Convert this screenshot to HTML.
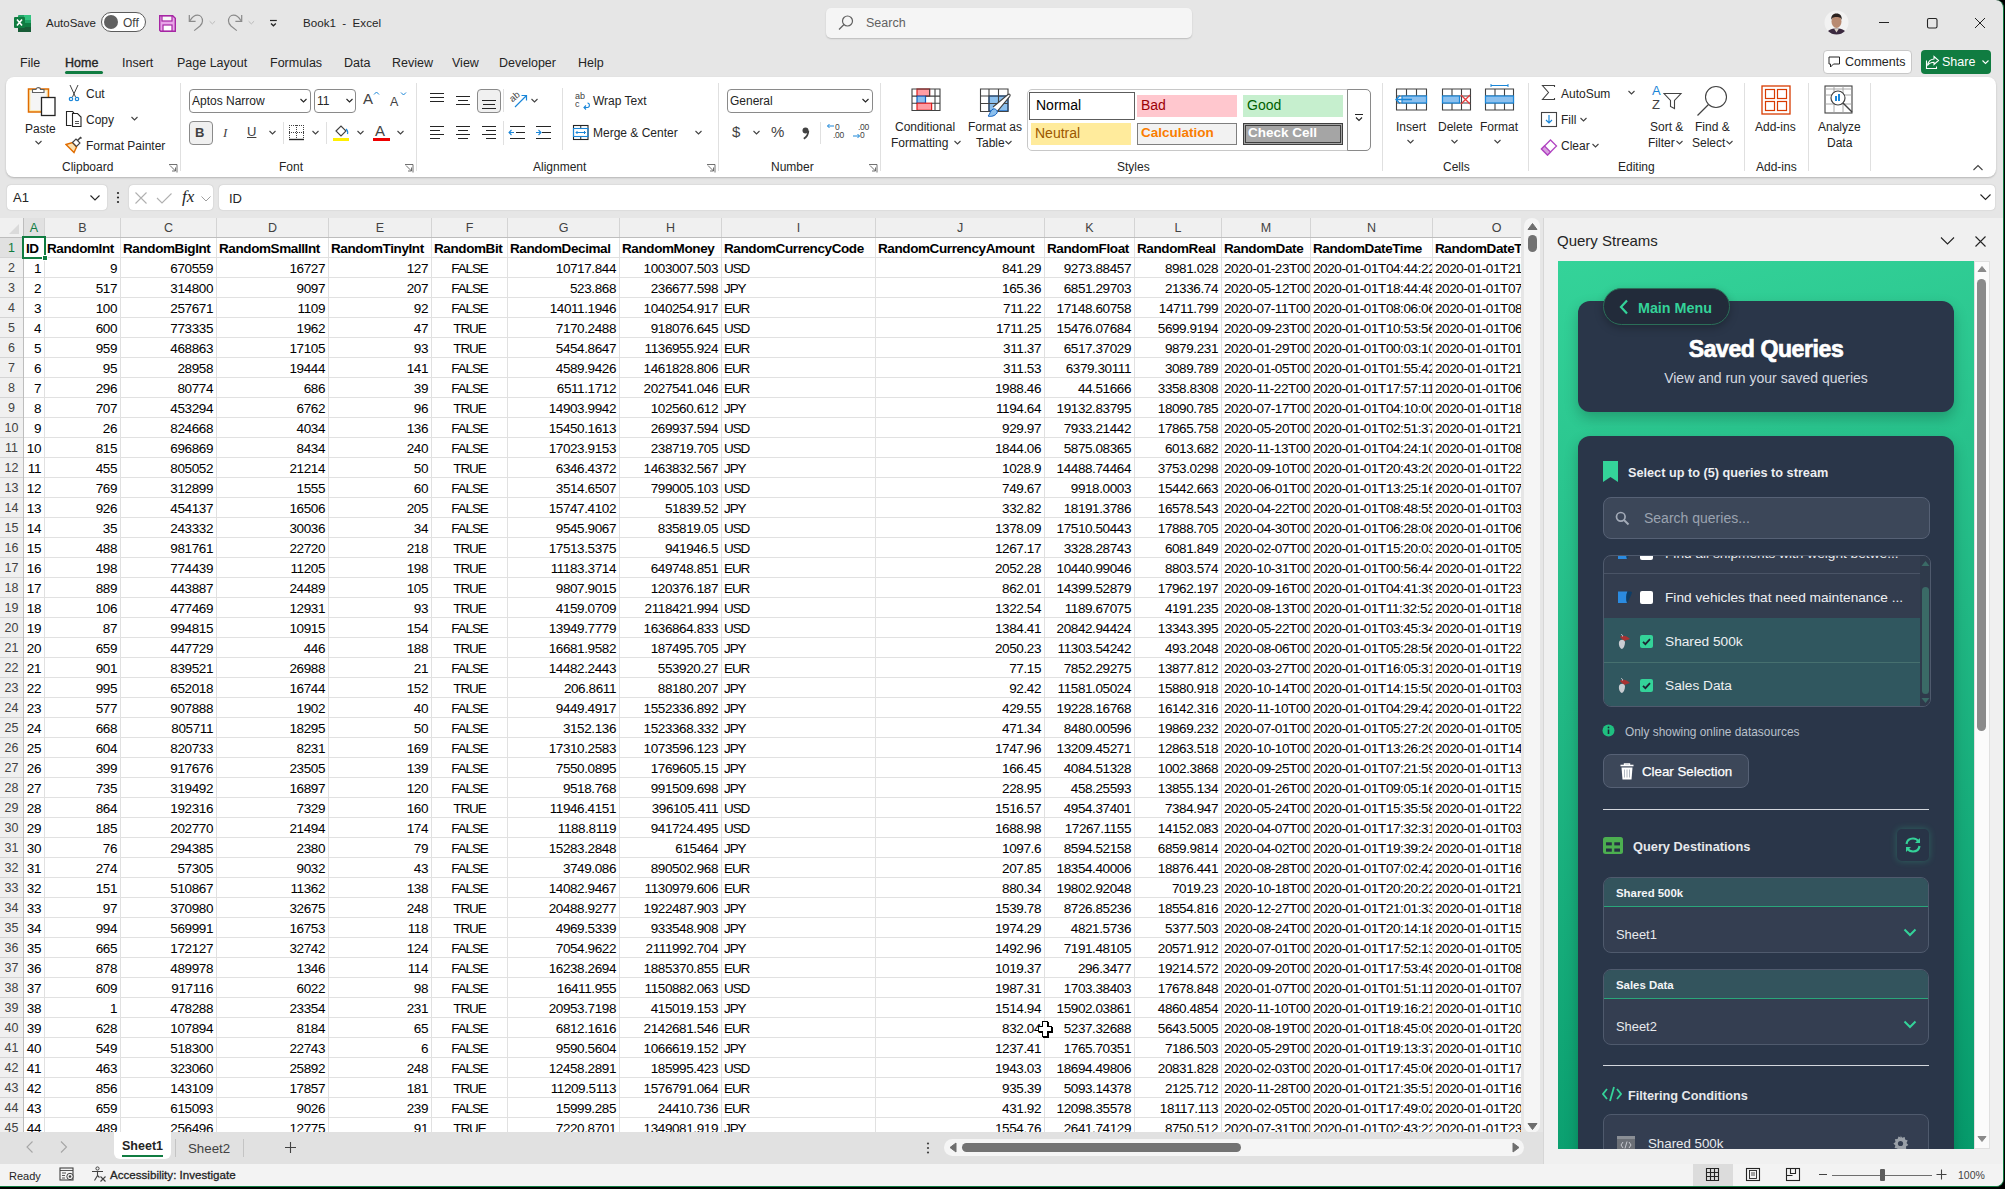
<!DOCTYPE html>
<html><head><meta charset="utf-8"><title>Book1 - Excel</title>
<style>
*{margin:0;padding:0;box-sizing:border-box}
html,body{width:2005px;height:1189px;overflow:hidden;background:#000}
body{font-family:"Liberation Sans",sans-serif;color:#242424;position:relative}
#win{position:absolute;left:0;top:0;width:2004px;height:1187px;background:#e6e6e6;overflow:hidden;border-radius:0 8px 8px 0;border-right:1px solid #107c41;border-bottom:1px solid #107c41}
.a{position:absolute}
.t{position:absolute;white-space:nowrap;font-size:14px;line-height:16px}
#grid .row{position:absolute;left:0;width:1521px;height:19px}
#grid .row div{position:absolute;top:0;height:19px;line-height:22px;white-space:nowrap;overflow:hidden;font-size:13.5px;letter-spacing:-0.4px;color:#000}
#grid .cr{text-align:right;padding-right:3px}
#grid .cl{text-align:left;padding-left:2px}
#grid .cc{text-align:center}
#grid .cb{font-weight:bold;padding-left:2px}
#grid .ch{position:absolute;top:0;height:19px;line-height:20px;text-align:center;font-size:12.5px}
#grid .rh{position:absolute;left:0;width:23px;height:19px;line-height:20px;text-align:center;font-size:12.5px}
#grid .row .up{letter-spacing:-1.1px}

</style></head>
<body>
<div id="win">
<!-- title bar -->
<svg class="a" style="left:14px;top:15px" width="17" height="17" viewBox="0 0 17 17">
<rect x="4" y="0" width="13" height="17" rx="1" fill="#21a366"/>
<rect x="10" y="0" width="7" height="5" fill="#33c481"/>
<rect x="4" y="8" width="13" height="5" fill="#107c41"/>
<rect x="4" y="12" width="13" height="5" fill="#185c37"/>
<rect x="0" y="2" width="11" height="11" rx="1" fill="#107c41"/>
<path d="M3 4.5l5 6M8 4.5l-5 6" stroke="#fff" stroke-width="1.6"/>
</svg>
<div class="t" style="left:46px;top:15px;font-size:11.5px;color:#242424">AutoSave</div>
<div class="a" style="left:101px;top:12px;width:45px;height:20px;border:1.3px solid #5c5c5c;border-radius:10px;background:#fff"></div>
<div class="a" style="left:104px;top:15px;width:14px;height:14px;border-radius:7px;background:#616161"></div>
<div class="t" style="left:123px;top:15px;font-size:12px;color:#424242">Off</div>
<svg class="a" style="left:159px;top:15px" width="17" height="17" viewBox="0 0 17 17">
<path d="M0.7 0.7h13l2.6 2.6v13h-14.6l-1-1z" fill="#e8a6e8" stroke="#a626a4" stroke-width="1.4"/>
<rect x="3" y="1" width="10" height="5" fill="#f7f7f7" stroke="#a626a4" stroke-width="1.2"/>
<rect x="4" y="10" width="9" height="6" fill="#fff" stroke="#a626a4" stroke-width="1.2"/>
</svg>
<svg class="a" style="left:180px;top:8px" width="110" height="30" viewBox="0 0 110 30">
<path d="M9.3 7.1v6.3h6.3" fill="none" stroke="#8a8a8a" stroke-width="1.2"/>
<path d="M10 12.8c2-3.5 4.5-5.6 7.5-5.6c3 0 5 2.5 5 5.8c0 2-1 3.5-2.5 5l-5.8 4.6" fill="none" stroke="#8a8a8a" stroke-width="1.2"/>
<path d="M29.6 13.2l2.75 2.7l2.75-2.7" fill="none" stroke="#b4b4b4" stroke-width="0.9"/>
<path d="M61.7 7.1v6.3h-6.3" fill="none" stroke="#8a8a8a" stroke-width="1.2"/>
<path d="M61 12.8c-2-3.5-4.5-5.6-7.5-5.6c-3 0-5 2.5-5 5.8c0 2 1 3.5 2.5 5l5.8 4.6" fill="none" stroke="#8a8a8a" stroke-width="1.2"/>
<path d="M68.6 13.2l2.75 2.7l2.75-2.7" fill="none" stroke="#b4b4b4" stroke-width="0.9"/>
<path d="M90 12.5h6.8" stroke="#242424" stroke-width="1.2"/>
<path d="M91 15.6l2.4 2.2l2.4-2.2" fill="none" stroke="#242424" stroke-width="1.3"/>
</svg>
<div class="t" style="left:303px;top:15px;font-size:11.6px;color:#242424">Book1&nbsp;&nbsp;-&nbsp;&nbsp;Excel</div>
<div class="a" style="left:826px;top:8px;width:366px;height:30px;background:#f5f5f5;border-radius:5px;box-shadow:0 1px 1.5px rgba(0,0,0,0.18)"></div>
<svg class="a" style="left:838px;top:15px" width="16" height="16" viewBox="0 0 16 16">
<circle cx="9.5" cy="6" r="5" fill="none" stroke="#616161" stroke-width="1.2"/>
<path d="M6 9.5l-5 5" stroke="#616161" stroke-width="1.3"/>
</svg>
<div class="t" style="left:866px;top:15px;font-size:12.5px;color:#616161">Search</div>
<svg class="a" style="left:1824px;top:10px" width="25" height="25" viewBox="0 0 25 25"><defs><clipPath id="av"><circle cx="12.5" cy="12.5" r="12"/></clipPath></defs><g clip-path="url(#av)"><rect width="25" height="25" fill="#f2f2f2"/><path d="M2 25c1-5 5-6.5 10.5-6.5s9.5 1.5 10.5 6.5z" fill="#3b2a3f"/><path d="M10 18.5l2.5 4l2.5-4z" fill="#d8cfc4"/><ellipse cx="12.5" cy="11.5" rx="5" ry="6.5" fill="#b88a72"/><path d="M7.3 10c-0.5-4 1.5-6.5 5.2-6.5s5.7 2.5 5.2 6.5c-0.5-2-1.5-3-5.2-3s-4.7 1-5.2 3z" fill="#2b2220"/></g></svg>
<svg class="a" style="left:1870px;top:8px" width="130" height="30" viewBox="0 0 130 30">
<path d="M9 14.5h10" stroke="#242424" stroke-width="1"/>
<rect x="57.5" y="10.5" width="9.5" height="9.5" rx="1.5" fill="none" stroke="#242424" stroke-width="1.1"/>
<path d="M105 10l10 10M115 10l-10 10" stroke="#242424" stroke-width="1"/>
</svg>
<!-- tabs -->
<div class="t" style="left:20px;top:55px;font-size:12.5px">File</div>
<div class="t" style="left:65px;top:55px;font-size:12.5px;color:#242424;-webkit-text-stroke:0.35px #242424">Home</div>
<div class="a" style="left:65px;top:71px;width:38px;height:3px;border-radius:2px;background:#107c41"></div>
<div class="t" style="left:122px;top:55px;font-size:12.5px">Insert</div>
<div class="t" style="left:177px;top:55px;font-size:12.5px">Page Layout</div>
<div class="t" style="left:270px;top:55px;font-size:12.5px">Formulas</div>
<div class="t" style="left:344px;top:55px;font-size:12.5px">Data</div>
<div class="t" style="left:392px;top:55px;font-size:12.5px">Review</div>
<div class="t" style="left:452px;top:55px;font-size:12.5px">View</div>
<div class="t" style="left:499px;top:55px;font-size:12.5px">Developer</div>
<div class="t" style="left:578px;top:55px;font-size:12.5px">Help</div>
<div class="a" style="left:1823px;top:50px;width:89px;height:24px;background:#fff;border:1px solid #c8c8c8;border-radius:4px"></div>
<svg class="a" style="left:1828px;top:56px" width="13" height="12" viewBox="0 0 13 12">
<path d="M1 1h10.5v7h-6l-3 3v-3h-1.5z" fill="none" stroke="#242424" stroke-width="1"/>
</svg>
<div class="t" style="left:1845px;top:54px;font-size:12.5px">Comments</div>
<div class="a" style="left:1921px;top:50px;width:70px;height:24px;background:#107c41;border-radius:4px"></div>
<svg class="a" style="left:1925px;top:55px" width="15" height="15" viewBox="0 0 15 15">
<path d="M9 1.5l4.5 4l-4.5 4v-2.3c-3 0-5 1-6.5 3.3c0.5-3.5 2.5-6 6.5-6.5z" fill="none" stroke="#fff" stroke-width="1.1"/>
<path d="M1.5 5.5v8h10v-2" fill="none" stroke="#fff" stroke-width="1.1"/>
</svg>
<div class="t" style="left:1942px;top:54px;font-size:12.5px;color:#fff">Share</div>
<svg class="a" style="left:1981px;top:58px" width="10" height="8" viewBox="0 0 10 8"><path d="M1.5 2.5l3 3l3-3" fill="none" stroke="#fff" stroke-width="1.1"/></svg>

<!-- ribbon -->
<div class="a" style="left:6px;top:77px;width:1990px;height:100px;background:#fff;border-radius:8px;box-shadow:0 1px 2px rgba(0,0,0,0.22)"></div>
<div class="a" style="left:180px;top:83px;width:1px;height:88px;background:#e0e0e0"></div>
<div class="a" style="left:416px;top:83px;width:1px;height:88px;background:#e0e0e0"></div>
<div class="a" style="left:718px;top:83px;width:1px;height:88px;background:#e0e0e0"></div>
<div class="a" style="left:880px;top:83px;width:1px;height:88px;background:#e0e0e0"></div>
<div class="a" style="left:1382px;top:83px;width:1px;height:88px;background:#e0e0e0"></div>
<div class="a" style="left:1528px;top:83px;width:1px;height:88px;background:#e0e0e0"></div>
<div class="a" style="left:1744px;top:83px;width:1px;height:88px;background:#e0e0e0"></div>
<div class="a" style="left:1808px;top:83px;width:1px;height:88px;background:#e0e0e0"></div>
<div class="a" style="left:1870px;top:83px;width:1px;height:88px;background:#e0e0e0"></div>
<!-- clipboard -->
<svg class="a" style="left:27px;top:85px" width="30" height="32" viewBox="0 0 30 32">
<rect x="1.5" y="4" width="20" height="23" fill="#fde9b0" stroke="#e06c00" stroke-width="1.5"/>
<rect x="3.5" y="6" width="16" height="19" fill="#f5f5f5"/>
<path d="M5.5 7.5v-3h3.5c0-2.5 4.5-2.5 4.5 0h3.5v3z" fill="#fff" stroke="#616161" stroke-width="1.1"/>
<rect x="14.5" y="12.5" width="13.5" height="18" fill="#fff" stroke="#242424" stroke-width="1.3"/>
</svg>
<div class="t" style="left:25px;top:121px;font-size:12px">Paste</div>
<svg class="a" style="left:34px;top:140px" width="9" height="6" viewBox="0 0 9 6"><path d="M1.5 1l3 3l3-3" fill="none" stroke="#424242" stroke-width="1.1"/></svg>
<svg class="a" style="left:67px;top:84px" width="14" height="18" viewBox="0 0 14 18">
<path d="M3 1l5.5 12M11 1l-5.5 12" stroke="#424242" stroke-width="1"/>
<circle cx="4" cy="15" r="1.7" fill="none" stroke="#1a86d8" stroke-width="1.2"/>
<circle cx="10" cy="15" r="1.7" fill="none" stroke="#1a86d8" stroke-width="1.2"/>
</svg>
<div class="t" style="left:86px;top:86px;font-size:12px">Cut</div>
<svg class="a" style="left:65px;top:110px" width="18" height="18" viewBox="0 0 18 18">
<path d="M6.5 15.5h-5v-14h6l1.5 1.5" fill="none" stroke="#242424" stroke-width="1.1"/>
<path d="M7.5 3.5h5l3.5 3.5v9.5h-8.5z" fill="#fff" stroke="#242424" stroke-width="1.1"/>
<path d="M10 11.5h4M10 13.5h4" stroke="#424242" stroke-width="0.9"/>
</svg>
<div class="t" style="left:86px;top:112px;font-size:12px">Copy</div>
<svg class="a" style="left:130px;top:116px" width="9" height="6" viewBox="0 0 9 6"><path d="M1.5 1l3 3l3-3" fill="none" stroke="#424242" stroke-width="1.1"/></svg>
<svg class="a" style="left:65px;top:136px" width="18" height="18" viewBox="0 0 18 18">
<path d="M1 8.5l6.5-2l4 4.5l-2.5 5.5z" fill="#fde2b0" stroke="#e06c00" stroke-width="1.4"/>
<path d="M7.5 6.5l3.5-3.5l4 4l-3.5 3.5z" fill="#fff" stroke="#424242" stroke-width="1.1"/>
<path d="M12.5 4.5l3-3l1 1" fill="none" stroke="#424242" stroke-width="1.5"/>
</svg>
<div class="t" style="left:86px;top:138px;font-size:12px">Format Painter</div>
<div class="t" style="left:62px;top:159px;font-size:12px">Clipboard</div>
<svg class="a" style="left:168px;top:163px" width="10" height="10" viewBox="0 0 10 10"><path d="M1 1.5h8v8M2 2.5l5.5 5.5M7.5 4.5v3.5h-3.5" fill="none" stroke="#616161" stroke-width="0.9"/></svg>
<!-- font -->
<div class="a" style="left:189px;top:89px;width:122px;height:24px;border:1px solid #8a8a8a;border-radius:4px"></div>
<div class="t" style="left:192px;top:93px;font-size:12px">Aptos Narrow</div>
<svg class="a" style="left:299px;top:98px" width="9" height="6" viewBox="0 0 9 6"><path d="M1.5 1l3 3l3-3" fill="none" stroke="#242424" stroke-width="1.1"/></svg>
<div class="a" style="left:314px;top:89px;width:42px;height:24px;border:1px solid #8a8a8a;border-radius:4px"></div>
<div class="t" style="left:317px;top:93px;font-size:12px">11</div>
<svg class="a" style="left:345px;top:98px" width="9" height="6" viewBox="0 0 9 6"><path d="M1.5 1l3 3l3-3" fill="none" stroke="#242424" stroke-width="1.1"/></svg>
<div class="t" style="left:363px;top:91px;font-size:15px;color:#424242">A</div>
<svg class="a" style="left:373px;top:91px" width="7" height="5" viewBox="0 0 7 5"><path d="M1 3.5l2.5-2.5l2.5 2.5" fill="none" stroke="#1a86d8" stroke-width="1"/></svg>
<div class="t" style="left:390px;top:94px;font-size:12.5px;color:#424242">A</div>
<svg class="a" style="left:400px;top:91px" width="7" height="5" viewBox="0 0 7 5"><path d="M1 1.5l2.5 2.5l2.5-2.5" fill="none" stroke="#1a86d8" stroke-width="1"/></svg>
<div class="a" style="left:189px;top:121px;width:24px;height:24px;border:1px solid #8a8a8a;border-radius:4px;background:#f0f0f0"></div>
<div class="t" style="left:195px;top:125px;font-size:13px;font-weight:bold;color:#424242">B</div>
<div class="t" style="left:223px;top:125px;font-size:13px;font-style:italic;color:#424242;font-family:'Liberation Serif'">I</div>
<div class="t" style="left:247px;top:124px;font-size:13px;color:#424242;text-decoration:underline">U</div>
<svg class="a" style="left:268px;top:130px" width="9" height="6" viewBox="0 0 9 6"><path d="M1.5 1l3 3l3-3" fill="none" stroke="#424242" stroke-width="1.1"/></svg>
<div class="a" style="left:283px;top:122px;width:1px;height:22px;background:#e0e0e0"></div>
<svg class="a" style="left:288px;top:124px" width="17" height="17" viewBox="0 0 17 17">
<path d="M1 1.5h15M1.5 1v14M15.5 1v14M8.5 1v14M1 8.5h15" fill="none" stroke="#424242" stroke-width="1" stroke-dasharray="1 1" shape-rendering="crispEdges"/>
<path d="M1 15.5h15" stroke="#242424" stroke-width="1.4"/>
</svg>
<svg class="a" style="left:311px;top:130px" width="9" height="6" viewBox="0 0 9 6"><path d="M1.5 1l3 3l3-3" fill="none" stroke="#424242" stroke-width="1.1"/></svg>
<div class="a" style="left:326px;top:122px;width:1px;height:22px;background:#e0e0e0"></div>
<svg class="a" style="left:333px;top:123px" width="17" height="19" viewBox="0 0 17 19">
<path d="M3 8l5-5l5 5l-5 5z" fill="none" stroke="#424242" stroke-width="1.1"/>
<path d="M13 6c1.5 1.5 2 3.5 1.5 5" fill="none" stroke="#1a86d8" stroke-width="1.2"/>
<rect x="0" y="15" width="16" height="3" fill="#ffef00"/>
</svg>
<svg class="a" style="left:356px;top:130px" width="9" height="6" viewBox="0 0 9 6"><path d="M1.5 1l3 3l3-3" fill="none" stroke="#424242" stroke-width="1.1"/></svg>
<div class="t" style="left:375px;top:123px;font-size:15px;color:#424242">A</div>
<div class="a" style="left:373px;top:138px;width:17px;height:3px;background:#e00"></div>
<svg class="a" style="left:396px;top:130px" width="9" height="6" viewBox="0 0 9 6"><path d="M1.5 1l3 3l3-3" fill="none" stroke="#424242" stroke-width="1.1"/></svg>
<div class="t" style="left:279px;top:159px;font-size:12px">Font</div>
<svg class="a" style="left:404px;top:163px" width="10" height="10" viewBox="0 0 10 10"><path d="M1 1.5h8v8M2 2.5l5.5 5.5M7.5 4.5v3.5h-3.5" fill="none" stroke="#616161" stroke-width="0.9"/></svg>
<!-- alignment -->
<svg class="a" style="left:428px;top:86px" width="140" height="60" viewBox="0 0 140 60">
<path d="M2 7.5h14M2 11.5h14M2 15.5h14" stroke="#242424" stroke-width="1.1" transform="translate(0,0)"/>
<path d="M28 10.5h14M30 14.5h10M28 18.5h14" stroke="#242424" stroke-width="1.1"/>
<rect x="49.5" y="3.5" width="23" height="23" rx="3.5" fill="#f0f0f0" stroke="#8a8a8a" stroke-width="1"/>
<path d="M54 14.5h14M55 18.5h12M54 22.5h14" stroke="#242424" stroke-width="1.1"/>
<path d="M75.5 3v23" stroke="#e0e0e0"/>
<path d="M2 40.5h14M2 44.5h10M2 48.5h14M2 52.5h10" stroke="#242424" stroke-width="1.1"/>
<path d="M28 40.5h14M30 44.5h10M28 48.5h14M30 52.5h10" stroke="#242424" stroke-width="1.1"/>
<path d="M54 40.5h14M58 44.5h10M54 48.5h14M58 52.5h10" stroke="#242424" stroke-width="1.1"/>
<path d="M75.5 35v24" stroke="#e0e0e0"/>
<path d="M82 40.5h15M88 46.5h9M82 52.5h15" stroke="#242424" stroke-width="1.1"/>
<path d="M86 46.5h-4.5M83.5 44l-2.5 2.5l2.5 2.5" fill="none" stroke="#1a86d8" stroke-width="1.1"/>
<path d="M108 40.5h15M114 46.5h9M108 52.5h15" stroke="#242424" stroke-width="1.1"/>
<path d="M108 46.5h4.5M110.5 44l2.5 2.5l-2.5 2.5" fill="none" stroke="#1a86d8" stroke-width="1.1"/>
</svg>
<svg class="a" style="left:508px;top:90px" width="22" height="20" viewBox="0 0 22 20"><text x="0" y="0" transform="translate(4.5,12.5) rotate(-40)" font-family="Liberation Sans" font-size="9.5" fill="#424242">ab</text><path d="M7 17l11-11M13.5 5.5h5v5" fill="none" stroke="#1a86d8" stroke-width="1.2"/></svg>
<svg class="a" style="left:530px;top:98px" width="9" height="6" viewBox="0 0 9 6"><path d="M1.5 1l3 3l3-3" fill="none" stroke="#424242" stroke-width="1.1"/></svg>
<div class="a" style="left:562px;top:88px;width:1px;height:62px;background:#e0e0e0"></div>
<div class="t" style="left:575px;top:92px;font-size:9px;line-height:8px;color:#424242">ab<br>c</div>
<svg class="a" style="left:580px;top:100px" width="12" height="10" viewBox="0 0 12 10"><path d="M4 7.5h3.5c2.5 0 2.5-4.5 0-4.5M6 5.5l-2 2l2 2" fill="none" stroke="#1a86d8" stroke-width="1.1"/></svg>
<div class="t" style="left:593px;top:93px;font-size:12px">Wrap Text</div>
<svg class="a" style="left:572px;top:124px" width="18" height="17" viewBox="0 0 18 17">
<rect x="1.5" y="1.5" width="14.5" height="14" fill="none" stroke="#242424" stroke-width="1.1"/>
<path d="M1.5 4.5h14.5M1.5 12.5h14.5M8.75 1.5v3M8.75 12.5v3" stroke="#242424" stroke-width="1"/>
<rect x="1.5" y="4.5" width="14.5" height="8" fill="none" stroke="#1a86d8" stroke-width="1.1"/>
<path d="M4 8.5h9.5M5.5 7l-1.5 1.5l1.5 1.5M12 7l1.5 1.5l-1.5 1.5" fill="none" stroke="#1a86d8" stroke-width="1"/>
</svg>
<div class="t" style="left:593px;top:125px;font-size:12px">Merge &amp; Center</div>
<svg class="a" style="left:694px;top:130px" width="9" height="6" viewBox="0 0 9 6"><path d="M1.5 1l3 3l3-3" fill="none" stroke="#424242" stroke-width="1.1"/></svg>
<div class="t" style="left:533px;top:159px;font-size:12px">Alignment</div>
<svg class="a" style="left:706px;top:163px" width="10" height="10" viewBox="0 0 10 10"><path d="M1 1.5h8v8M2 2.5l5.5 5.5M7.5 4.5v3.5h-3.5" fill="none" stroke="#616161" stroke-width="0.9"/></svg>
<!-- number -->
<div class="a" style="left:727px;top:89px;width:146px;height:24px;border:1px solid #8a8a8a;border-radius:4px"></div>
<div class="t" style="left:730px;top:93px;font-size:12px">General</div>
<svg class="a" style="left:861px;top:98px" width="9" height="6" viewBox="0 0 9 6"><path d="M1.5 1l3 3l3-3" fill="none" stroke="#242424" stroke-width="1.1"/></svg>
<div class="t" style="left:732px;top:124px;font-size:15px;color:#424242">$</div>
<svg class="a" style="left:752px;top:130px" width="9" height="6" viewBox="0 0 9 6"><path d="M1.5 1l3 3l3-3" fill="none" stroke="#424242" stroke-width="1.1"/></svg>
<div class="t" style="left:771px;top:124px;font-size:15px;color:#424242">%</div>
<svg class="a" style="left:801px;top:126px" width="9" height="15" viewBox="0 0 9 15"><circle cx="4.5" cy="4.5" r="3" fill="#424242"/><path d="M7.3 4.8c0 4-2 6.5-4.5 8" fill="none" stroke="#424242" stroke-width="1.8"/></svg>
<div class="a" style="left:820px;top:122px;width:1px;height:22px;background:#e0e0e0"></div>
<div class="t" style="left:833px;top:123px;font-size:8.5px;line-height:8px;color:#424242;letter-spacing:-0.3px">&nbsp;0<br>.00</div>
<svg class="a" style="left:826px;top:122px" width="9" height="8" viewBox="0 0 9 8"><path d="M8 4h-6.5M3.5 2l-2 2l2 2" fill="none" stroke="#1a86d8" stroke-width="1"/></svg>
<div class="t" style="left:858px;top:123px;font-size:8.5px;line-height:8px;color:#424242;letter-spacing:-0.3px">.00<br>&nbsp;0</div>
<svg class="a" style="left:852px;top:132px" width="9" height="8" viewBox="0 0 9 8"><path d="M1 4h6.5M5.5 2l2 2l-2 2" fill="none" stroke="#1a86d8" stroke-width="1"/></svg>
<div class="t" style="left:771px;top:159px;font-size:12px">Number</div>
<svg class="a" style="left:868px;top:163px" width="10" height="10" viewBox="0 0 10 10"><path d="M1 1.5h8v8M2 2.5l5.5 5.5M7.5 4.5v3.5h-3.5" fill="none" stroke="#616161" stroke-width="0.9"/></svg>
<!-- styles -->
<svg class="a" style="left:911px;top:88px" width="30" height="24" viewBox="0 0 30 24">
<rect x="6" y="1" width="12.6" height="7.1" fill="#ff9ca3" stroke="#e01e1e" stroke-width="1.2"/>
<rect x="6" y="8.1" width="8.5" height="7.1" fill="#8cc0ee" stroke="#1060c0" stroke-width="1.2"/>
<rect x="6" y="15.2" width="14.6" height="7.1" fill="#ff9ca3" stroke="#e01e1e" stroke-width="1.2"/>
<path d="M1 1h28v21.5h-28zM1 8.1h5M1 15.2h5M18.6 8.1h10.4M20.6 15.2h8.4M24 1v21.5M18.6 1v7.1M14.5 8.1h4.1" fill="none" stroke="#424242" stroke-width="1.1"/>
</svg>
<div class="t" style="left:895px;top:119px;font-size:12px">Conditional</div>
<div class="t" style="left:891px;top:135px;font-size:12px">Formatting</div>
<svg class="a" style="left:953px;top:140px" width="9" height="6" viewBox="0 0 9 6"><path d="M1.5 1l3 3l3-3" fill="none" stroke="#424242" stroke-width="1.1"/></svg>
<svg class="a" style="left:979px;top:88px" width="34" height="30" viewBox="0 0 34 30">
<rect x="10" y="8" width="19" height="15" fill="#8cc0ee" stroke="#1060c0" stroke-width="1.2"/>
<path d="M1.5 1h27.5v22.5h-27.5zM1.5 8h27.5M1.5 15.5h27.5M10 1v22.5M19.5 1v22.5" fill="none" stroke="#424242" stroke-width="1.1"/>
<path d="M14 19l15-12.5c1.5-1 2.8 0.3 1.8 1.8l-12.5 15" fill="#fff" stroke="#424242" stroke-width="1.1"/>
<path d="M9 28c3 1 7 0 9-3c1-2-1-4.5-3.5-4c-2.5 0.5-3 3-4 5c-0.5 1-1 1.5-1.5 2z" fill="#8cc0ee" stroke="#1060c0" stroke-width="1"/>
</svg>
<div class="t" style="left:968px;top:119px;font-size:12px">Format as</div>
<div class="t" style="left:976px;top:135px;font-size:12px">Table</div>
<svg class="a" style="left:1004px;top:140px" width="9" height="6" viewBox="0 0 9 6"><path d="M1.5 1l3 3l3-3" fill="none" stroke="#424242" stroke-width="1.1"/></svg>
<div class="a" style="left:1027px;top:89px;width:344px;height:62px;border:1px solid #c8c8c8;border-radius:5px"></div>
<div class="a" style="left:1029px;top:92px;width:106px;height:28px;border:1.5px solid #5c5c5c;background:#fff"></div>
<div class="t" style="left:1036px;top:97px;font-size:14px;color:#000">Normal</div>
<div class="a" style="left:1137px;top:95px;width:100px;height:22px;background:#ffc7ce"></div>
<div class="t" style="left:1141px;top:97px;font-size:14px;color:#9c0006">Bad</div>
<div class="a" style="left:1243px;top:95px;width:100px;height:22px;background:#c6efce"></div>
<div class="t" style="left:1247px;top:97px;font-size:14px;color:#006100">Good</div>
<div class="a" style="left:1031px;top:123px;width:100px;height:22px;background:#ffeb9c"></div>
<div class="t" style="left:1035px;top:125px;font-size:14px;color:#9c5700">Neutral</div>
<div class="a" style="left:1137px;top:123px;width:100px;height:22px;background:#f2f2f2;border:1px solid #7f7f7f"></div>
<div class="t" style="left:1141px;top:125px;font-size:13.5px;font-weight:bold;color:#fa7d00">Calculation</div>
<div class="a" style="left:1243px;top:123px;width:100px;height:22px;background:#a5a5a5;border:3px double #3f3f3f"></div>
<div class="t" style="left:1248px;top:125px;font-size:13.5px;font-weight:bold;color:#fff">Check Cell</div>
<div class="a" style="left:1347px;top:89px;width:24px;height:62px;border:1px solid #8a8a8a;border-radius:0 5px 5px 0;background:#fff"></div>
<svg class="a" style="left:1353px;top:113px" width="12" height="10" viewBox="0 0 12 10"><path d="M2 1.5h8M3 4.5l3 3l3-3" fill="none" stroke="#242424" stroke-width="1.1"/></svg>
<div class="t" style="left:1117px;top:159px;font-size:12px">Styles</div>
<!-- cells -->
<svg class="a" style="left:1394px;top:84px" width="130" height="30" viewBox="0 0 130 30">
<path d="M2.5 5h30v21h-30zM2.5 12h30M2.5 19h30M12.5 5v21M22.5 5v21" fill="none" stroke="#424242" stroke-width="1.1"/>
<rect x="8" y="12" width="24.5" height="7" fill="#8cc0ee" stroke="#1a86d8" stroke-width="1.2"/>
<path d="M18 15.5h-16M6 11.5l-4 4l4 4" fill="none" stroke="#1a86d8" stroke-width="1.3"/>
<path d="M48.5 5h28v21h-28zM48.5 12h28M48.5 19h28M58 5v21M67.5 5v21" fill="none" stroke="#424242" stroke-width="1.1"/>
<rect x="48.5" y="12" width="17" height="7" fill="#8cc0ee" stroke="#1a86d8" stroke-width="1.2"/>
<path d="M67 11l9 9M76 11l-9 9" stroke="#e83a3a" stroke-width="1.3"/>
<path d="M91.5 5h28v21h-28zM91.5 12h28M91.5 19h28M101 5v21M110.5 5v21" fill="none" stroke="#424242" stroke-width="1.1"/>
<rect x="91.5" y="12" width="28" height="7" fill="#8cc0ee" stroke="#1a86d8" stroke-width="1.2"/>
<path d="M97 1.5h17M97 0v3M114 0v3" stroke="#1a86d8" stroke-width="1"/>
</svg>
<div class="t" style="left:1396px;top:119px;font-size:12px">Insert</div>
<div class="t" style="left:1438px;top:119px;font-size:12px">Delete</div>
<div class="t" style="left:1480px;top:119px;font-size:12px">Format</div>
<svg class="a" style="left:1406px;top:139px" width="110" height="6" viewBox="0 0 110 6"><path d="M1.5 1l3 3l3-3M45.5 1l3 3l3-3M88.5 1l3 3l3-3" fill="none" stroke="#424242" stroke-width="1.1"/></svg>
<div class="t" style="left:1443px;top:159px;font-size:12px">Cells</div>
<!-- editing -->
<svg class="a" style="left:1541px;top:84px" width="15" height="17" viewBox="0 0 15 17"><path d="M13.5 3v-1.5h-12l6 7l-6 7h12v-1.5" fill="none" stroke="#424242" stroke-width="1.1"/></svg>
<div class="t" style="left:1561px;top:86px;font-size:12px">AutoSum</div>
<svg class="a" style="left:1627px;top:90px" width="9" height="6" viewBox="0 0 9 6"><path d="M1.5 1l3 3l3-3" fill="none" stroke="#424242" stroke-width="1.1"/></svg>
<svg class="a" style="left:1540px;top:111px" width="18" height="17" viewBox="0 0 18 17"><rect x="1.5" y="1.5" width="15" height="14" fill="none" stroke="#424242" stroke-width="1.1"/><path d="M9 4v8M6 9l3 3l3-3" fill="none" stroke="#1a86d8" stroke-width="1.2"/></svg>
<div class="t" style="left:1561px;top:112px;font-size:12px">Fill</div>
<svg class="a" style="left:1579px;top:117px" width="9" height="6" viewBox="0 0 9 6"><path d="M1.5 1l3 3l3-3" fill="none" stroke="#424242" stroke-width="1.1"/></svg>
<svg class="a" style="left:1540px;top:138px" width="19" height="18" viewBox="0 0 19 18"><path d="M1.5 11l9-9l6 6l-9 9z" fill="none" stroke="#b146c2" stroke-width="1.3"/><path d="M1.5 11l3-3l6 6l-3 3z" fill="#d9a0e0" stroke="#b146c2" stroke-width="1.3"/></svg>
<div class="t" style="left:1561px;top:138px;font-size:12px">Clear</div>
<svg class="a" style="left:1591px;top:143px" width="9" height="6" viewBox="0 0 9 6"><path d="M1.5 1l3 3l3-3" fill="none" stroke="#424242" stroke-width="1.1"/></svg>
<div class="t" style="left:1652px;top:84px;font-size:13px;color:#1a86d8;line-height:13px">A</div>
<div class="t" style="left:1652px;top:98px;font-size:13px;color:#424242;line-height:13px">Z</div>
<svg class="a" style="left:1663px;top:92px" width="20" height="18" viewBox="0 0 20 18"><path d="M1 1.5h17l-6.5 7v8l-4-2v-6z" fill="none" stroke="#424242" stroke-width="1.1"/></svg>
<svg class="a" style="left:1696px;top:85px" width="34" height="31" viewBox="0 0 34 31"><circle cx="20" cy="12" r="10.5" fill="none" stroke="#424242" stroke-width="1.1"/><path d="M12.5 19.5l-11 11" stroke="#424242" stroke-width="1.2"/></svg>
<div class="t" style="left:1650px;top:119px;font-size:12px">Sort &amp;</div>
<div class="t" style="left:1648px;top:135px;font-size:12px">Filter</div>
<svg class="a" style="left:1675px;top:140px" width="9" height="6" viewBox="0 0 9 6"><path d="M1.5 1l3 3l3-3" fill="none" stroke="#424242" stroke-width="1.1"/></svg>
<div class="t" style="left:1695px;top:119px;font-size:12px">Find &amp;</div>
<div class="t" style="left:1692px;top:135px;font-size:12px">Select</div>
<svg class="a" style="left:1725px;top:140px" width="9" height="6" viewBox="0 0 9 6"><path d="M1.5 1l3 3l3-3" fill="none" stroke="#424242" stroke-width="1.1"/></svg>
<div class="t" style="left:1618px;top:159px;font-size:12px">Editing</div>
<!-- add-ins -->
<svg class="a" style="left:1761px;top:85px" width="30" height="30" viewBox="0 0 30 30"><rect x="1" y="1" width="28" height="28" fill="none" stroke="#d83b01" stroke-width="1.3"/><rect x="4.5" y="4.5" width="9" height="9" fill="none" stroke="#d83b01" stroke-width="1.2"/><rect x="16.5" y="4.5" width="9" height="9" fill="none" stroke="#d83b01" stroke-width="1.2"/><rect x="4.5" y="16.5" width="9" height="9" fill="none" stroke="#d83b01" stroke-width="1.2"/><rect x="16.5" y="16.5" width="9" height="9" fill="none" stroke="#d83b01" stroke-width="1.2"/></svg>
<div class="t" style="left:1755px;top:119px;font-size:12px">Add-ins</div>
<div class="t" style="left:1756px;top:159px;font-size:12px">Add-ins</div>
<svg class="a" style="left:1824px;top:85px" width="31" height="31" viewBox="0 0 31 31"><rect x="1" y="1" width="27" height="27" fill="none" stroke="#424242" stroke-width="1.1"/><path d="M1 4h27M1 10h27M1 19h27M10 1v27M19 1v27" stroke="#9e9e9e" stroke-width="0.9"/><circle cx="14" cy="13" r="7" fill="#fff" stroke="#424242" stroke-width="1.2"/><rect x="11" y="11" width="2" height="5" fill="#1a86d8"/><rect x="14" y="9" width="2" height="7" fill="#1a86d8"/><path d="M19 18l9 9" stroke="#424242" stroke-width="1.4"/></svg>
<div class="t" style="left:1818px;top:119px;font-size:12px">Analyze</div>
<div class="t" style="left:1827px;top:135px;font-size:12px">Data</div>
<svg class="a" style="left:1972px;top:164px" width="12" height="8" viewBox="0 0 12 8"><path d="M1.5 6l4.5-4.5l4.5 4.5" fill="none" stroke="#424242" stroke-width="1.1"/></svg>

<!-- formula bar -->
<div class="a" style="left:7px;top:185px;width:100px;height:25px;background:#fff;border-radius:4px;box-shadow:0 0 1.2px rgba(0,0,0,0.28)"></div>
<div class="t" style="left:13px;top:190px;font-size:13px">A1</div>
<svg class="a" style="left:89px;top:194px" width="12" height="8" viewBox="0 0 12 8"><path d="M1.5 1.5l4.5 4.5l4.5-4.5" fill="none" stroke="#242424" stroke-width="1.1"/></svg>
<svg class="a" style="left:116px;top:190px" width="4" height="15" viewBox="0 0 4 15"><circle cx="2" cy="3" r="1.1" fill="#242424"/><circle cx="2" cy="7.5" r="1.1" fill="#242424"/><circle cx="2" cy="12" r="1.1" fill="#242424"/></svg>
<div class="a" style="left:129px;top:185px;width:84px;height:25px;background:#fff;border-radius:4px;box-shadow:0 0 1.2px rgba(0,0,0,0.28)"></div>
<svg class="a" style="left:134px;top:190px" width="80" height="16" viewBox="0 0 80 16">
<path d="M1.5 2.5l11 11M12.5 2.5l-11 11" stroke="#b0b0b0" stroke-width="1.1"/>
<path d="M23 8l5 5l9.5-9.5" fill="none" stroke="#b0b0b0" stroke-width="1.1"/>
<path d="M67.5 6.5l4.5 4.5l4.5-4.5" fill="none" stroke="#9e9e9e" stroke-width="1"/>
</svg>
<div class="t" style="left:182px;top:188px;font-size:17px;line-height:18px;font-style:italic;font-family:'Liberation Serif',serif;color:#242424">fx</div>
<div class="a" style="left:219px;top:185px;width:1776px;height:25px;background:#fff;border-radius:4px;box-shadow:0 0 1.2px rgba(0,0,0,0.28)"></div>
<div class="t" style="left:229px;top:191px;font-size:13px">ID</div>
<svg class="a" style="left:1979px;top:193px" width="14" height="9" viewBox="0 0 14 9"><path d="M1.5 1.5l5 5l5-5" fill="none" stroke="#242424" stroke-width="1.1"/></svg>

<div class="a" id="grid" style="left:0;top:218px;width:1521px;height:917px;background:#fff;overflow:hidden">
<div class="a" style="left:0;top:0;width:1521px;height:19px;background:#f0f0f0"></div>
<div class="a" style="left:0;top:0;width:23px;height:917px;background:#f0f0f0"></div>
<div class="a" style="left:24px;top:0;width:20px;height:19px;background:#e1e1e1"></div>
<div class="a" style="left:0;top:20px;width:23px;height:19px;background:#e1e1e1"></div>
<svg class="a" style="left:8px;top:6px" width="12" height="10" viewBox="0 0 12 10"><path d="M11 0v10h-10z" fill="#dadada"/></svg>
<svg class="a" style="left:0;top:0" width="1521" height="917"><path d="M0 19.5H1521" stroke="#bdbdbd"/><path d="M24 39.5H1521M24 59.5H1521M24 79.5H1521M24 99.5H1521M24 119.5H1521M24 139.5H1521M24 159.5H1521M24 179.5H1521M24 199.5H1521M24 219.5H1521M24 239.5H1521M24 259.5H1521M24 279.5H1521M24 299.5H1521M24 319.5H1521M24 339.5H1521M24 359.5H1521M24 379.5H1521M24 399.5H1521M24 419.5H1521M24 439.5H1521M24 459.5H1521M24 479.5H1521M24 499.5H1521M24 519.5H1521M24 539.5H1521M24 559.5H1521M24 579.5H1521M24 599.5H1521M24 619.5H1521M24 639.5H1521M24 659.5H1521M24 679.5H1521M24 699.5H1521M24 719.5H1521M24 739.5H1521M24 759.5H1521M24 779.5H1521M24 799.5H1521M24 819.5H1521M24 839.5H1521M24 859.5H1521M24 879.5H1521M24 899.5H1521M24 919.5H1521" stroke="#e1e1e1"/><path d="M0 39.5H23M0 59.5H23M0 79.5H23M0 99.5H23M0 119.5H23M0 139.5H23M0 159.5H23M0 179.5H23M0 199.5H23M0 219.5H23M0 239.5H23M0 259.5H23M0 279.5H23M0 299.5H23M0 319.5H23M0 339.5H23M0 359.5H23M0 379.5H23M0 399.5H23M0 419.5H23M0 439.5H23M0 459.5H23M0 479.5H23M0 499.5H23M0 519.5H23M0 539.5H23M0 559.5H23M0 579.5H23M0 599.5H23M0 619.5H23M0 639.5H23M0 659.5H23M0 679.5H23M0 699.5H23M0 719.5H23M0 739.5H23M0 759.5H23M0 779.5H23M0 799.5H23M0 819.5H23M0 839.5H23M0 859.5H23M0 879.5H23M0 899.5H23M0 919.5H23" stroke="#d4d4d4"/><path d="M44.5 20V917M120.5 20V917M216.5 20V917M328.5 20V917M431.5 20V917M507.5 20V917M619.5 20V917M721.5 20V917M875.5 20V917M1044.5 20V917M1134.5 20V917M1221.5 20V917M1310.5 20V917M1432.5 20V917M1521.5 20V917" stroke="#e1e1e1"/><path d="M44.5 0V19M120.5 0V19M216.5 0V19M328.5 0V19M431.5 0V19M507.5 0V19M619.5 0V19M721.5 0V19M875.5 0V19M1044.5 0V19M1134.5 0V19M1221.5 0V19M1310.5 0V19M1432.5 0V19M1521.5 0V19" stroke="#d4d4d4"/><path d="M23.5 0V917" stroke="#bdbdbd"/></svg>
<div class="ch" style="left:24px;width:20px;color:#107c41">A</div>
<div class="ch" style="left:45px;width:75px;color:#424242">B</div>
<div class="ch" style="left:121px;width:95px;color:#424242">C</div>
<div class="ch" style="left:217px;width:111px;color:#424242">D</div>
<div class="ch" style="left:329px;width:102px;color:#424242">E</div>
<div class="ch" style="left:432px;width:75px;color:#424242">F</div>
<div class="ch" style="left:508px;width:111px;color:#424242">G</div>
<div class="ch" style="left:620px;width:101px;color:#424242">H</div>
<div class="ch" style="left:722px;width:153px;color:#424242">I</div>
<div class="ch" style="left:876px;width:168px;color:#424242">J</div>
<div class="ch" style="left:1045px;width:89px;color:#424242">K</div>
<div class="ch" style="left:1135px;width:86px;color:#424242">L</div>
<div class="ch" style="left:1222px;width:88px;color:#424242">M</div>
<div class="ch" style="left:1311px;width:121px;color:#424242">N</div>
<div class="ch" style="left:1433px;width:127px;color:#424242">O</div>
<div class="rh" style="top:20px;color:#107c41">1</div>
<div class="rh" style="top:40px;color:#424242">2</div>
<div class="rh" style="top:60px;color:#424242">3</div>
<div class="rh" style="top:80px;color:#424242">4</div>
<div class="rh" style="top:100px;color:#424242">5</div>
<div class="rh" style="top:120px;color:#424242">6</div>
<div class="rh" style="top:140px;color:#424242">7</div>
<div class="rh" style="top:160px;color:#424242">8</div>
<div class="rh" style="top:180px;color:#424242">9</div>
<div class="rh" style="top:200px;color:#424242">10</div>
<div class="rh" style="top:220px;color:#424242">11</div>
<div class="rh" style="top:240px;color:#424242">12</div>
<div class="rh" style="top:260px;color:#424242">13</div>
<div class="rh" style="top:280px;color:#424242">14</div>
<div class="rh" style="top:300px;color:#424242">15</div>
<div class="rh" style="top:320px;color:#424242">16</div>
<div class="rh" style="top:340px;color:#424242">17</div>
<div class="rh" style="top:360px;color:#424242">18</div>
<div class="rh" style="top:380px;color:#424242">19</div>
<div class="rh" style="top:400px;color:#424242">20</div>
<div class="rh" style="top:420px;color:#424242">21</div>
<div class="rh" style="top:440px;color:#424242">22</div>
<div class="rh" style="top:460px;color:#424242">23</div>
<div class="rh" style="top:480px;color:#424242">24</div>
<div class="rh" style="top:500px;color:#424242">25</div>
<div class="rh" style="top:520px;color:#424242">26</div>
<div class="rh" style="top:540px;color:#424242">27</div>
<div class="rh" style="top:560px;color:#424242">28</div>
<div class="rh" style="top:580px;color:#424242">29</div>
<div class="rh" style="top:600px;color:#424242">30</div>
<div class="rh" style="top:620px;color:#424242">31</div>
<div class="rh" style="top:640px;color:#424242">32</div>
<div class="rh" style="top:660px;color:#424242">33</div>
<div class="rh" style="top:680px;color:#424242">34</div>
<div class="rh" style="top:700px;color:#424242">35</div>
<div class="rh" style="top:720px;color:#424242">36</div>
<div class="rh" style="top:740px;color:#424242">37</div>
<div class="rh" style="top:760px;color:#424242">38</div>
<div class="rh" style="top:780px;color:#424242">39</div>
<div class="rh" style="top:800px;color:#424242">40</div>
<div class="rh" style="top:820px;color:#424242">41</div>
<div class="rh" style="top:840px;color:#424242">42</div>
<div class="rh" style="top:860px;color:#424242">43</div>
<div class="rh" style="top:880px;color:#424242">44</div>
<div class="rh" style="top:900px;color:#424242">45</div>
<div class="row" style="top:20px"><div class="cb" style="left:24px;width:20px">ID</div><div class="cb" style="left:45px;width:75px">RandomInt</div><div class="cb" style="left:121px;width:95px">RandomBigInt</div><div class="cb" style="left:217px;width:111px">RandomSmallInt</div><div class="cb" style="left:329px;width:102px">RandomTinyInt</div><div class="cb" style="left:432px;width:75px">RandomBit</div><div class="cb" style="left:508px;width:111px">RandomDecimal</div><div class="cb" style="left:620px;width:101px">RandomMoney</div><div class="cb" style="left:722px;width:153px">RandomCurrencyCode</div><div class="cb" style="left:876px;width:168px">RandomCurrencyAmount</div><div class="cb" style="left:1045px;width:89px">RandomFloat</div><div class="cb" style="left:1135px;width:86px">RandomReal</div><div class="cb" style="left:1222px;width:88px">RandomDate</div><div class="cb" style="left:1311px;width:121px">RandomDateTime</div><div class="cb" style="left:1433px;width:88px">RandomDateTime2</div></div>
<div class="row" style="top:40px"><div class="cr" style="left:24px;width:20px">1</div><div class="cr" style="left:45px;width:75px">9</div><div class="cr" style="left:121px;width:95px">670559</div><div class="cr" style="left:217px;width:111px">16727</div><div class="cr" style="left:329px;width:102px">127</div><div class="cc up" style="left:432px;width:75px">FALSE</div><div class="cr" style="left:508px;width:111px">10717.844</div><div class="cr" style="left:620px;width:101px">1003007.503</div><div class="cl up" style="left:722px;width:153px">USD</div><div class="cr" style="left:876px;width:168px">841.29</div><div class="cr" style="left:1045px;width:89px">9273.88457</div><div class="cr" style="left:1135px;width:86px">8981.028</div><div class="cl" style="left:1222px;width:88px">2020-01-23T00</div><div class="cl" style="left:1311px;width:121px">2020-01-01T04:44:22</div><div class="cl" style="left:1433px;width:88px">2020-01-01T21</div></div>
<div class="row" style="top:60px"><div class="cr" style="left:24px;width:20px">2</div><div class="cr" style="left:45px;width:75px">517</div><div class="cr" style="left:121px;width:95px">314800</div><div class="cr" style="left:217px;width:111px">9097</div><div class="cr" style="left:329px;width:102px">207</div><div class="cc up" style="left:432px;width:75px">FALSE</div><div class="cr" style="left:508px;width:111px">523.868</div><div class="cr" style="left:620px;width:101px">236677.598</div><div class="cl up" style="left:722px;width:153px">JPY</div><div class="cr" style="left:876px;width:168px">165.36</div><div class="cr" style="left:1045px;width:89px">6851.29703</div><div class="cr" style="left:1135px;width:86px">21336.74</div><div class="cl" style="left:1222px;width:88px">2020-05-12T00</div><div class="cl" style="left:1311px;width:121px">2020-01-01T18:44:48</div><div class="cl" style="left:1433px;width:88px">2020-01-01T07</div></div>
<div class="row" style="top:80px"><div class="cr" style="left:24px;width:20px">3</div><div class="cr" style="left:45px;width:75px">100</div><div class="cr" style="left:121px;width:95px">257671</div><div class="cr" style="left:217px;width:111px">1109</div><div class="cr" style="left:329px;width:102px">92</div><div class="cc up" style="left:432px;width:75px">FALSE</div><div class="cr" style="left:508px;width:111px">14011.1946</div><div class="cr" style="left:620px;width:101px">1040254.917</div><div class="cl up" style="left:722px;width:153px">EUR</div><div class="cr" style="left:876px;width:168px">711.22</div><div class="cr" style="left:1045px;width:89px">17148.60758</div><div class="cr" style="left:1135px;width:86px">14711.799</div><div class="cl" style="left:1222px;width:88px">2020-07-11T00</div><div class="cl" style="left:1311px;width:121px">2020-01-01T08:06:06</div><div class="cl" style="left:1433px;width:88px">2020-01-01T08</div></div>
<div class="row" style="top:100px"><div class="cr" style="left:24px;width:20px">4</div><div class="cr" style="left:45px;width:75px">600</div><div class="cr" style="left:121px;width:95px">773335</div><div class="cr" style="left:217px;width:111px">1962</div><div class="cr" style="left:329px;width:102px">47</div><div class="cc up" style="left:432px;width:75px">TRUE</div><div class="cr" style="left:508px;width:111px">7170.2488</div><div class="cr" style="left:620px;width:101px">918076.645</div><div class="cl up" style="left:722px;width:153px">USD</div><div class="cr" style="left:876px;width:168px">1711.25</div><div class="cr" style="left:1045px;width:89px">15476.07684</div><div class="cr" style="left:1135px;width:86px">5699.9194</div><div class="cl" style="left:1222px;width:88px">2020-09-23T00</div><div class="cl" style="left:1311px;width:121px">2020-01-01T10:53:56</div><div class="cl" style="left:1433px;width:88px">2020-01-01T06</div></div>
<div class="row" style="top:120px"><div class="cr" style="left:24px;width:20px">5</div><div class="cr" style="left:45px;width:75px">959</div><div class="cr" style="left:121px;width:95px">468863</div><div class="cr" style="left:217px;width:111px">17105</div><div class="cr" style="left:329px;width:102px">93</div><div class="cc up" style="left:432px;width:75px">TRUE</div><div class="cr" style="left:508px;width:111px">5454.8647</div><div class="cr" style="left:620px;width:101px">1136955.924</div><div class="cl up" style="left:722px;width:153px">EUR</div><div class="cr" style="left:876px;width:168px">311.37</div><div class="cr" style="left:1045px;width:89px">6517.37029</div><div class="cr" style="left:1135px;width:86px">9879.231</div><div class="cl" style="left:1222px;width:88px">2020-01-29T00</div><div class="cl" style="left:1311px;width:121px">2020-01-01T00:03:10</div><div class="cl" style="left:1433px;width:88px">2020-01-01T01</div></div>
<div class="row" style="top:140px"><div class="cr" style="left:24px;width:20px">6</div><div class="cr" style="left:45px;width:75px">95</div><div class="cr" style="left:121px;width:95px">28958</div><div class="cr" style="left:217px;width:111px">19444</div><div class="cr" style="left:329px;width:102px">141</div><div class="cc up" style="left:432px;width:75px">FALSE</div><div class="cr" style="left:508px;width:111px">4589.9426</div><div class="cr" style="left:620px;width:101px">1461828.806</div><div class="cl up" style="left:722px;width:153px">EUR</div><div class="cr" style="left:876px;width:168px">311.53</div><div class="cr" style="left:1045px;width:89px">6379.30111</div><div class="cr" style="left:1135px;width:86px">3089.789</div><div class="cl" style="left:1222px;width:88px">2020-01-05T00</div><div class="cl" style="left:1311px;width:121px">2020-01-01T01:55:42</div><div class="cl" style="left:1433px;width:88px">2020-01-01T21</div></div>
<div class="row" style="top:160px"><div class="cr" style="left:24px;width:20px">7</div><div class="cr" style="left:45px;width:75px">296</div><div class="cr" style="left:121px;width:95px">80774</div><div class="cr" style="left:217px;width:111px">686</div><div class="cr" style="left:329px;width:102px">39</div><div class="cc up" style="left:432px;width:75px">FALSE</div><div class="cr" style="left:508px;width:111px">6511.1712</div><div class="cr" style="left:620px;width:101px">2027541.046</div><div class="cl up" style="left:722px;width:153px">EUR</div><div class="cr" style="left:876px;width:168px">1988.46</div><div class="cr" style="left:1045px;width:89px">44.51666</div><div class="cr" style="left:1135px;width:86px">3358.8308</div><div class="cl" style="left:1222px;width:88px">2020-11-22T00</div><div class="cl" style="left:1311px;width:121px">2020-01-01T17:57:11</div><div class="cl" style="left:1433px;width:88px">2020-01-01T06</div></div>
<div class="row" style="top:180px"><div class="cr" style="left:24px;width:20px">8</div><div class="cr" style="left:45px;width:75px">707</div><div class="cr" style="left:121px;width:95px">453294</div><div class="cr" style="left:217px;width:111px">6762</div><div class="cr" style="left:329px;width:102px">96</div><div class="cc up" style="left:432px;width:75px">TRUE</div><div class="cr" style="left:508px;width:111px">14903.9942</div><div class="cr" style="left:620px;width:101px">102560.612</div><div class="cl up" style="left:722px;width:153px">JPY</div><div class="cr" style="left:876px;width:168px">1194.64</div><div class="cr" style="left:1045px;width:89px">19132.83795</div><div class="cr" style="left:1135px;width:86px">18090.785</div><div class="cl" style="left:1222px;width:88px">2020-07-17T00</div><div class="cl" style="left:1311px;width:121px">2020-01-01T04:10:00</div><div class="cl" style="left:1433px;width:88px">2020-01-01T18</div></div>
<div class="row" style="top:200px"><div class="cr" style="left:24px;width:20px">9</div><div class="cr" style="left:45px;width:75px">26</div><div class="cr" style="left:121px;width:95px">824668</div><div class="cr" style="left:217px;width:111px">4034</div><div class="cr" style="left:329px;width:102px">136</div><div class="cc up" style="left:432px;width:75px">FALSE</div><div class="cr" style="left:508px;width:111px">15450.1613</div><div class="cr" style="left:620px;width:101px">269937.594</div><div class="cl up" style="left:722px;width:153px">USD</div><div class="cr" style="left:876px;width:168px">929.97</div><div class="cr" style="left:1045px;width:89px">7933.21442</div><div class="cr" style="left:1135px;width:86px">17865.758</div><div class="cl" style="left:1222px;width:88px">2020-05-20T00</div><div class="cl" style="left:1311px;width:121px">2020-01-01T02:51:37</div><div class="cl" style="left:1433px;width:88px">2020-01-01T21</div></div>
<div class="row" style="top:220px"><div class="cr" style="left:24px;width:20px">10</div><div class="cr" style="left:45px;width:75px">815</div><div class="cr" style="left:121px;width:95px">696869</div><div class="cr" style="left:217px;width:111px">8434</div><div class="cr" style="left:329px;width:102px">240</div><div class="cc up" style="left:432px;width:75px">FALSE</div><div class="cr" style="left:508px;width:111px">17023.9153</div><div class="cr" style="left:620px;width:101px">238719.705</div><div class="cl up" style="left:722px;width:153px">USD</div><div class="cr" style="left:876px;width:168px">1844.06</div><div class="cr" style="left:1045px;width:89px">5875.08365</div><div class="cr" style="left:1135px;width:86px">6013.682</div><div class="cl" style="left:1222px;width:88px">2020-11-13T00</div><div class="cl" style="left:1311px;width:121px">2020-01-01T04:24:10</div><div class="cl" style="left:1433px;width:88px">2020-01-01T08</div></div>
<div class="row" style="top:240px"><div class="cr" style="left:24px;width:20px">11</div><div class="cr" style="left:45px;width:75px">455</div><div class="cr" style="left:121px;width:95px">805052</div><div class="cr" style="left:217px;width:111px">21214</div><div class="cr" style="left:329px;width:102px">50</div><div class="cc up" style="left:432px;width:75px">TRUE</div><div class="cr" style="left:508px;width:111px">6346.4372</div><div class="cr" style="left:620px;width:101px">1463832.567</div><div class="cl up" style="left:722px;width:153px">JPY</div><div class="cr" style="left:876px;width:168px">1028.9</div><div class="cr" style="left:1045px;width:89px">14488.74464</div><div class="cr" style="left:1135px;width:86px">3753.0298</div><div class="cl" style="left:1222px;width:88px">2020-09-10T00</div><div class="cl" style="left:1311px;width:121px">2020-01-01T20:43:20</div><div class="cl" style="left:1433px;width:88px">2020-01-01T22</div></div>
<div class="row" style="top:260px"><div class="cr" style="left:24px;width:20px">12</div><div class="cr" style="left:45px;width:75px">769</div><div class="cr" style="left:121px;width:95px">312899</div><div class="cr" style="left:217px;width:111px">1555</div><div class="cr" style="left:329px;width:102px">60</div><div class="cc up" style="left:432px;width:75px">FALSE</div><div class="cr" style="left:508px;width:111px">3514.6507</div><div class="cr" style="left:620px;width:101px">799005.103</div><div class="cl up" style="left:722px;width:153px">USD</div><div class="cr" style="left:876px;width:168px">749.67</div><div class="cr" style="left:1045px;width:89px">9918.0003</div><div class="cr" style="left:1135px;width:86px">15442.663</div><div class="cl" style="left:1222px;width:88px">2020-06-01T00</div><div class="cl" style="left:1311px;width:121px">2020-01-01T13:25:16</div><div class="cl" style="left:1433px;width:88px">2020-01-01T07</div></div>
<div class="row" style="top:280px"><div class="cr" style="left:24px;width:20px">13</div><div class="cr" style="left:45px;width:75px">926</div><div class="cr" style="left:121px;width:95px">454137</div><div class="cr" style="left:217px;width:111px">16506</div><div class="cr" style="left:329px;width:102px">205</div><div class="cc up" style="left:432px;width:75px">FALSE</div><div class="cr" style="left:508px;width:111px">15747.4102</div><div class="cr" style="left:620px;width:101px">51839.52</div><div class="cl up" style="left:722px;width:153px">JPY</div><div class="cr" style="left:876px;width:168px">332.82</div><div class="cr" style="left:1045px;width:89px">18191.3786</div><div class="cr" style="left:1135px;width:86px">16578.543</div><div class="cl" style="left:1222px;width:88px">2020-04-22T00</div><div class="cl" style="left:1311px;width:121px">2020-01-01T08:48:55</div><div class="cl" style="left:1433px;width:88px">2020-01-01T03</div></div>
<div class="row" style="top:300px"><div class="cr" style="left:24px;width:20px">14</div><div class="cr" style="left:45px;width:75px">35</div><div class="cr" style="left:121px;width:95px">243332</div><div class="cr" style="left:217px;width:111px">30036</div><div class="cr" style="left:329px;width:102px">34</div><div class="cc up" style="left:432px;width:75px">FALSE</div><div class="cr" style="left:508px;width:111px">9545.9067</div><div class="cr" style="left:620px;width:101px">835819.05</div><div class="cl up" style="left:722px;width:153px">USD</div><div class="cr" style="left:876px;width:168px">1378.09</div><div class="cr" style="left:1045px;width:89px">17510.50443</div><div class="cr" style="left:1135px;width:86px">17888.705</div><div class="cl" style="left:1222px;width:88px">2020-04-30T00</div><div class="cl" style="left:1311px;width:121px">2020-01-01T06:28:08</div><div class="cl" style="left:1433px;width:88px">2020-01-01T06</div></div>
<div class="row" style="top:320px"><div class="cr" style="left:24px;width:20px">15</div><div class="cr" style="left:45px;width:75px">488</div><div class="cr" style="left:121px;width:95px">981761</div><div class="cr" style="left:217px;width:111px">22720</div><div class="cr" style="left:329px;width:102px">218</div><div class="cc up" style="left:432px;width:75px">TRUE</div><div class="cr" style="left:508px;width:111px">17513.5375</div><div class="cr" style="left:620px;width:101px">941946.5</div><div class="cl up" style="left:722px;width:153px">USD</div><div class="cr" style="left:876px;width:168px">1267.17</div><div class="cr" style="left:1045px;width:89px">3328.28743</div><div class="cr" style="left:1135px;width:86px">6081.849</div><div class="cl" style="left:1222px;width:88px">2020-02-07T00</div><div class="cl" style="left:1311px;width:121px">2020-01-01T15:20:03</div><div class="cl" style="left:1433px;width:88px">2020-01-01T05</div></div>
<div class="row" style="top:340px"><div class="cr" style="left:24px;width:20px">16</div><div class="cr" style="left:45px;width:75px">198</div><div class="cr" style="left:121px;width:95px">774439</div><div class="cr" style="left:217px;width:111px">11205</div><div class="cr" style="left:329px;width:102px">198</div><div class="cc up" style="left:432px;width:75px">TRUE</div><div class="cr" style="left:508px;width:111px">11183.3714</div><div class="cr" style="left:620px;width:101px">649748.851</div><div class="cl up" style="left:722px;width:153px">EUR</div><div class="cr" style="left:876px;width:168px">2052.28</div><div class="cr" style="left:1045px;width:89px">10440.99046</div><div class="cr" style="left:1135px;width:86px">8803.574</div><div class="cl" style="left:1222px;width:88px">2020-10-31T00</div><div class="cl" style="left:1311px;width:121px">2020-01-01T00:56:44</div><div class="cl" style="left:1433px;width:88px">2020-01-01T22</div></div>
<div class="row" style="top:360px"><div class="cr" style="left:24px;width:20px">17</div><div class="cr" style="left:45px;width:75px">889</div><div class="cr" style="left:121px;width:95px">443887</div><div class="cr" style="left:217px;width:111px">24489</div><div class="cr" style="left:329px;width:102px">105</div><div class="cc up" style="left:432px;width:75px">TRUE</div><div class="cr" style="left:508px;width:111px">9807.9015</div><div class="cr" style="left:620px;width:101px">120376.187</div><div class="cl up" style="left:722px;width:153px">EUR</div><div class="cr" style="left:876px;width:168px">862.01</div><div class="cr" style="left:1045px;width:89px">14399.52879</div><div class="cr" style="left:1135px;width:86px">17962.197</div><div class="cl" style="left:1222px;width:88px">2020-09-16T00</div><div class="cl" style="left:1311px;width:121px">2020-01-01T04:41:39</div><div class="cl" style="left:1433px;width:88px">2020-01-01T23</div></div>
<div class="row" style="top:380px"><div class="cr" style="left:24px;width:20px">18</div><div class="cr" style="left:45px;width:75px">106</div><div class="cr" style="left:121px;width:95px">477469</div><div class="cr" style="left:217px;width:111px">12931</div><div class="cr" style="left:329px;width:102px">93</div><div class="cc up" style="left:432px;width:75px">TRUE</div><div class="cr" style="left:508px;width:111px">4159.0709</div><div class="cr" style="left:620px;width:101px">2118421.994</div><div class="cl up" style="left:722px;width:153px">USD</div><div class="cr" style="left:876px;width:168px">1322.54</div><div class="cr" style="left:1045px;width:89px">1189.67075</div><div class="cr" style="left:1135px;width:86px">4191.235</div><div class="cl" style="left:1222px;width:88px">2020-08-13T00</div><div class="cl" style="left:1311px;width:121px">2020-01-01T11:32:52</div><div class="cl" style="left:1433px;width:88px">2020-01-01T18</div></div>
<div class="row" style="top:400px"><div class="cr" style="left:24px;width:20px">19</div><div class="cr" style="left:45px;width:75px">87</div><div class="cr" style="left:121px;width:95px">994815</div><div class="cr" style="left:217px;width:111px">10915</div><div class="cr" style="left:329px;width:102px">154</div><div class="cc up" style="left:432px;width:75px">FALSE</div><div class="cr" style="left:508px;width:111px">13949.7779</div><div class="cr" style="left:620px;width:101px">1636864.833</div><div class="cl up" style="left:722px;width:153px">USD</div><div class="cr" style="left:876px;width:168px">1384.41</div><div class="cr" style="left:1045px;width:89px">20842.94424</div><div class="cr" style="left:1135px;width:86px">13343.395</div><div class="cl" style="left:1222px;width:88px">2020-05-22T00</div><div class="cl" style="left:1311px;width:121px">2020-01-01T03:45:34</div><div class="cl" style="left:1433px;width:88px">2020-01-01T19</div></div>
<div class="row" style="top:420px"><div class="cr" style="left:24px;width:20px">20</div><div class="cr" style="left:45px;width:75px">659</div><div class="cr" style="left:121px;width:95px">447729</div><div class="cr" style="left:217px;width:111px">446</div><div class="cr" style="left:329px;width:102px">188</div><div class="cc up" style="left:432px;width:75px">TRUE</div><div class="cr" style="left:508px;width:111px">16681.9582</div><div class="cr" style="left:620px;width:101px">187495.705</div><div class="cl up" style="left:722px;width:153px">JPY</div><div class="cr" style="left:876px;width:168px">2050.23</div><div class="cr" style="left:1045px;width:89px">11303.54242</div><div class="cr" style="left:1135px;width:86px">493.2048</div><div class="cl" style="left:1222px;width:88px">2020-08-06T00</div><div class="cl" style="left:1311px;width:121px">2020-01-01T05:28:56</div><div class="cl" style="left:1433px;width:88px">2020-01-01T22</div></div>
<div class="row" style="top:440px"><div class="cr" style="left:24px;width:20px">21</div><div class="cr" style="left:45px;width:75px">901</div><div class="cr" style="left:121px;width:95px">839521</div><div class="cr" style="left:217px;width:111px">26988</div><div class="cr" style="left:329px;width:102px">21</div><div class="cc up" style="left:432px;width:75px">FALSE</div><div class="cr" style="left:508px;width:111px">14482.2443</div><div class="cr" style="left:620px;width:101px">553920.27</div><div class="cl up" style="left:722px;width:153px">EUR</div><div class="cr" style="left:876px;width:168px">77.15</div><div class="cr" style="left:1045px;width:89px">7852.29275</div><div class="cr" style="left:1135px;width:86px">13877.812</div><div class="cl" style="left:1222px;width:88px">2020-03-27T00</div><div class="cl" style="left:1311px;width:121px">2020-01-01T16:05:31</div><div class="cl" style="left:1433px;width:88px">2020-01-01T19</div></div>
<div class="row" style="top:460px"><div class="cr" style="left:24px;width:20px">22</div><div class="cr" style="left:45px;width:75px">995</div><div class="cr" style="left:121px;width:95px">652018</div><div class="cr" style="left:217px;width:111px">16744</div><div class="cr" style="left:329px;width:102px">152</div><div class="cc up" style="left:432px;width:75px">TRUE</div><div class="cr" style="left:508px;width:111px">206.8611</div><div class="cr" style="left:620px;width:101px">88180.207</div><div class="cl up" style="left:722px;width:153px">JPY</div><div class="cr" style="left:876px;width:168px">92.42</div><div class="cr" style="left:1045px;width:89px">11581.05024</div><div class="cr" style="left:1135px;width:86px">15880.918</div><div class="cl" style="left:1222px;width:88px">2020-10-14T00</div><div class="cl" style="left:1311px;width:121px">2020-01-01T14:15:50</div><div class="cl" style="left:1433px;width:88px">2020-01-01T03</div></div>
<div class="row" style="top:480px"><div class="cr" style="left:24px;width:20px">23</div><div class="cr" style="left:45px;width:75px">577</div><div class="cr" style="left:121px;width:95px">907888</div><div class="cr" style="left:217px;width:111px">1902</div><div class="cr" style="left:329px;width:102px">40</div><div class="cc up" style="left:432px;width:75px">FALSE</div><div class="cr" style="left:508px;width:111px">9449.4917</div><div class="cr" style="left:620px;width:101px">1552336.892</div><div class="cl up" style="left:722px;width:153px">JPY</div><div class="cr" style="left:876px;width:168px">429.55</div><div class="cr" style="left:1045px;width:89px">19228.16768</div><div class="cr" style="left:1135px;width:86px">16142.316</div><div class="cl" style="left:1222px;width:88px">2020-11-10T00</div><div class="cl" style="left:1311px;width:121px">2020-01-01T04:29:42</div><div class="cl" style="left:1433px;width:88px">2020-01-01T22</div></div>
<div class="row" style="top:500px"><div class="cr" style="left:24px;width:20px">24</div><div class="cr" style="left:45px;width:75px">668</div><div class="cr" style="left:121px;width:95px">805711</div><div class="cr" style="left:217px;width:111px">18295</div><div class="cr" style="left:329px;width:102px">50</div><div class="cc up" style="left:432px;width:75px">FALSE</div><div class="cr" style="left:508px;width:111px">3152.136</div><div class="cr" style="left:620px;width:101px">1523368.332</div><div class="cl up" style="left:722px;width:153px">JPY</div><div class="cr" style="left:876px;width:168px">471.34</div><div class="cr" style="left:1045px;width:89px">8480.00596</div><div class="cr" style="left:1135px;width:86px">19869.232</div><div class="cl" style="left:1222px;width:88px">2020-07-01T00</div><div class="cl" style="left:1311px;width:121px">2020-01-01T05:27:20</div><div class="cl" style="left:1433px;width:88px">2020-01-01T05</div></div>
<div class="row" style="top:520px"><div class="cr" style="left:24px;width:20px">25</div><div class="cr" style="left:45px;width:75px">604</div><div class="cr" style="left:121px;width:95px">820733</div><div class="cr" style="left:217px;width:111px">8231</div><div class="cr" style="left:329px;width:102px">169</div><div class="cc up" style="left:432px;width:75px">FALSE</div><div class="cr" style="left:508px;width:111px">17310.2583</div><div class="cr" style="left:620px;width:101px">1073596.123</div><div class="cl up" style="left:722px;width:153px">JPY</div><div class="cr" style="left:876px;width:168px">1747.96</div><div class="cr" style="left:1045px;width:89px">13209.45271</div><div class="cr" style="left:1135px;width:86px">12863.518</div><div class="cl" style="left:1222px;width:88px">2020-10-10T00</div><div class="cl" style="left:1311px;width:121px">2020-01-01T13:26:29</div><div class="cl" style="left:1433px;width:88px">2020-01-01T14</div></div>
<div class="row" style="top:540px"><div class="cr" style="left:24px;width:20px">26</div><div class="cr" style="left:45px;width:75px">399</div><div class="cr" style="left:121px;width:95px">917676</div><div class="cr" style="left:217px;width:111px">23505</div><div class="cr" style="left:329px;width:102px">139</div><div class="cc up" style="left:432px;width:75px">FALSE</div><div class="cr" style="left:508px;width:111px">7550.0895</div><div class="cr" style="left:620px;width:101px">1769605.15</div><div class="cl up" style="left:722px;width:153px">JPY</div><div class="cr" style="left:876px;width:168px">166.45</div><div class="cr" style="left:1045px;width:89px">4084.51328</div><div class="cr" style="left:1135px;width:86px">1002.3868</div><div class="cl" style="left:1222px;width:88px">2020-09-25T00</div><div class="cl" style="left:1311px;width:121px">2020-01-01T07:21:59</div><div class="cl" style="left:1433px;width:88px">2020-01-01T13</div></div>
<div class="row" style="top:560px"><div class="cr" style="left:24px;width:20px">27</div><div class="cr" style="left:45px;width:75px">735</div><div class="cr" style="left:121px;width:95px">319492</div><div class="cr" style="left:217px;width:111px">16897</div><div class="cr" style="left:329px;width:102px">120</div><div class="cc up" style="left:432px;width:75px">FALSE</div><div class="cr" style="left:508px;width:111px">9518.768</div><div class="cr" style="left:620px;width:101px">991509.698</div><div class="cl up" style="left:722px;width:153px">JPY</div><div class="cr" style="left:876px;width:168px">228.95</div><div class="cr" style="left:1045px;width:89px">458.25593</div><div class="cr" style="left:1135px;width:86px">13855.134</div><div class="cl" style="left:1222px;width:88px">2020-01-26T00</div><div class="cl" style="left:1311px;width:121px">2020-01-01T09:05:16</div><div class="cl" style="left:1433px;width:88px">2020-01-01T15</div></div>
<div class="row" style="top:580px"><div class="cr" style="left:24px;width:20px">28</div><div class="cr" style="left:45px;width:75px">864</div><div class="cr" style="left:121px;width:95px">192316</div><div class="cr" style="left:217px;width:111px">7329</div><div class="cr" style="left:329px;width:102px">160</div><div class="cc up" style="left:432px;width:75px">TRUE</div><div class="cr" style="left:508px;width:111px">11946.4151</div><div class="cr" style="left:620px;width:101px">396105.411</div><div class="cl up" style="left:722px;width:153px">USD</div><div class="cr" style="left:876px;width:168px">1516.57</div><div class="cr" style="left:1045px;width:89px">4954.37401</div><div class="cr" style="left:1135px;width:86px">7384.947</div><div class="cl" style="left:1222px;width:88px">2020-05-24T00</div><div class="cl" style="left:1311px;width:121px">2020-01-01T15:35:58</div><div class="cl" style="left:1433px;width:88px">2020-01-01T22</div></div>
<div class="row" style="top:600px"><div class="cr" style="left:24px;width:20px">29</div><div class="cr" style="left:45px;width:75px">185</div><div class="cr" style="left:121px;width:95px">202770</div><div class="cr" style="left:217px;width:111px">21494</div><div class="cr" style="left:329px;width:102px">174</div><div class="cc up" style="left:432px;width:75px">FALSE</div><div class="cr" style="left:508px;width:111px">1188.8119</div><div class="cr" style="left:620px;width:101px">941724.495</div><div class="cl up" style="left:722px;width:153px">USD</div><div class="cr" style="left:876px;width:168px">1688.98</div><div class="cr" style="left:1045px;width:89px">17267.1155</div><div class="cr" style="left:1135px;width:86px">14152.083</div><div class="cl" style="left:1222px;width:88px">2020-04-07T00</div><div class="cl" style="left:1311px;width:121px">2020-01-01T17:32:31</div><div class="cl" style="left:1433px;width:88px">2020-01-01T03</div></div>
<div class="row" style="top:620px"><div class="cr" style="left:24px;width:20px">30</div><div class="cr" style="left:45px;width:75px">76</div><div class="cr" style="left:121px;width:95px">294385</div><div class="cr" style="left:217px;width:111px">2380</div><div class="cr" style="left:329px;width:102px">79</div><div class="cc up" style="left:432px;width:75px">FALSE</div><div class="cr" style="left:508px;width:111px">15283.2848</div><div class="cr" style="left:620px;width:101px">615464</div><div class="cl up" style="left:722px;width:153px">JPY</div><div class="cr" style="left:876px;width:168px">1097.6</div><div class="cr" style="left:1045px;width:89px">8594.52158</div><div class="cr" style="left:1135px;width:86px">6859.9814</div><div class="cl" style="left:1222px;width:88px">2020-04-02T00</div><div class="cl" style="left:1311px;width:121px">2020-01-01T19:39:24</div><div class="cl" style="left:1433px;width:88px">2020-01-01T18</div></div>
<div class="row" style="top:640px"><div class="cr" style="left:24px;width:20px">31</div><div class="cr" style="left:45px;width:75px">274</div><div class="cr" style="left:121px;width:95px">57305</div><div class="cr" style="left:217px;width:111px">9032</div><div class="cr" style="left:329px;width:102px">43</div><div class="cc up" style="left:432px;width:75px">FALSE</div><div class="cr" style="left:508px;width:111px">3749.086</div><div class="cr" style="left:620px;width:101px">890502.968</div><div class="cl up" style="left:722px;width:153px">EUR</div><div class="cr" style="left:876px;width:168px">207.85</div><div class="cr" style="left:1045px;width:89px">18354.40006</div><div class="cr" style="left:1135px;width:86px">18876.441</div><div class="cl" style="left:1222px;width:88px">2020-08-28T00</div><div class="cl" style="left:1311px;width:121px">2020-01-01T07:02:42</div><div class="cl" style="left:1433px;width:88px">2020-01-01T16</div></div>
<div class="row" style="top:660px"><div class="cr" style="left:24px;width:20px">32</div><div class="cr" style="left:45px;width:75px">151</div><div class="cr" style="left:121px;width:95px">510867</div><div class="cr" style="left:217px;width:111px">11362</div><div class="cr" style="left:329px;width:102px">138</div><div class="cc up" style="left:432px;width:75px">FALSE</div><div class="cr" style="left:508px;width:111px">14082.9467</div><div class="cr" style="left:620px;width:101px">1130979.606</div><div class="cl up" style="left:722px;width:153px">EUR</div><div class="cr" style="left:876px;width:168px">880.34</div><div class="cr" style="left:1045px;width:89px">19802.92048</div><div class="cr" style="left:1135px;width:86px">7019.23</div><div class="cl" style="left:1222px;width:88px">2020-10-18T00</div><div class="cl" style="left:1311px;width:121px">2020-01-01T20:20:22</div><div class="cl" style="left:1433px;width:88px">2020-01-01T21</div></div>
<div class="row" style="top:680px"><div class="cr" style="left:24px;width:20px">33</div><div class="cr" style="left:45px;width:75px">97</div><div class="cr" style="left:121px;width:95px">370980</div><div class="cr" style="left:217px;width:111px">32675</div><div class="cr" style="left:329px;width:102px">248</div><div class="cc up" style="left:432px;width:75px">TRUE</div><div class="cr" style="left:508px;width:111px">20488.9277</div><div class="cr" style="left:620px;width:101px">1922487.903</div><div class="cl up" style="left:722px;width:153px">JPY</div><div class="cr" style="left:876px;width:168px">1539.78</div><div class="cr" style="left:1045px;width:89px">8726.85236</div><div class="cr" style="left:1135px;width:86px">18554.816</div><div class="cl" style="left:1222px;width:88px">2020-12-27T00</div><div class="cl" style="left:1311px;width:121px">2020-01-01T21:01:33</div><div class="cl" style="left:1433px;width:88px">2020-01-01T18</div></div>
<div class="row" style="top:700px"><div class="cr" style="left:24px;width:20px">34</div><div class="cr" style="left:45px;width:75px">994</div><div class="cr" style="left:121px;width:95px">569991</div><div class="cr" style="left:217px;width:111px">16753</div><div class="cr" style="left:329px;width:102px">118</div><div class="cc up" style="left:432px;width:75px">TRUE</div><div class="cr" style="left:508px;width:111px">4969.5339</div><div class="cr" style="left:620px;width:101px">933548.908</div><div class="cl up" style="left:722px;width:153px">JPY</div><div class="cr" style="left:876px;width:168px">1974.29</div><div class="cr" style="left:1045px;width:89px">4821.5736</div><div class="cr" style="left:1135px;width:86px">5377.503</div><div class="cl" style="left:1222px;width:88px">2020-08-24T00</div><div class="cl" style="left:1311px;width:121px">2020-01-01T20:14:18</div><div class="cl" style="left:1433px;width:88px">2020-01-01T15</div></div>
<div class="row" style="top:720px"><div class="cr" style="left:24px;width:20px">35</div><div class="cr" style="left:45px;width:75px">665</div><div class="cr" style="left:121px;width:95px">172127</div><div class="cr" style="left:217px;width:111px">32742</div><div class="cr" style="left:329px;width:102px">124</div><div class="cc up" style="left:432px;width:75px">FALSE</div><div class="cr" style="left:508px;width:111px">7054.9622</div><div class="cr" style="left:620px;width:101px">2111992.704</div><div class="cl up" style="left:722px;width:153px">JPY</div><div class="cr" style="left:876px;width:168px">1492.96</div><div class="cr" style="left:1045px;width:89px">7191.48105</div><div class="cr" style="left:1135px;width:86px">20571.912</div><div class="cl" style="left:1222px;width:88px">2020-07-01T00</div><div class="cl" style="left:1311px;width:121px">2020-01-01T17:52:13</div><div class="cl" style="left:1433px;width:88px">2020-01-01T05</div></div>
<div class="row" style="top:740px"><div class="cr" style="left:24px;width:20px">36</div><div class="cr" style="left:45px;width:75px">878</div><div class="cr" style="left:121px;width:95px">489978</div><div class="cr" style="left:217px;width:111px">1346</div><div class="cr" style="left:329px;width:102px">114</div><div class="cc up" style="left:432px;width:75px">FALSE</div><div class="cr" style="left:508px;width:111px">16238.2694</div><div class="cr" style="left:620px;width:101px">1885370.855</div><div class="cl up" style="left:722px;width:153px">EUR</div><div class="cr" style="left:876px;width:168px">1019.37</div><div class="cr" style="left:1045px;width:89px">296.3477</div><div class="cr" style="left:1135px;width:86px">19214.572</div><div class="cl" style="left:1222px;width:88px">2020-09-20T00</div><div class="cl" style="left:1311px;width:121px">2020-01-01T17:53:49</div><div class="cl" style="left:1433px;width:88px">2020-01-01T08</div></div>
<div class="row" style="top:760px"><div class="cr" style="left:24px;width:20px">37</div><div class="cr" style="left:45px;width:75px">609</div><div class="cr" style="left:121px;width:95px">917116</div><div class="cr" style="left:217px;width:111px">6022</div><div class="cr" style="left:329px;width:102px">98</div><div class="cc up" style="left:432px;width:75px">FALSE</div><div class="cr" style="left:508px;width:111px">16411.955</div><div class="cr" style="left:620px;width:101px">1150882.063</div><div class="cl up" style="left:722px;width:153px">USD</div><div class="cr" style="left:876px;width:168px">1987.31</div><div class="cr" style="left:1045px;width:89px">1703.38403</div><div class="cr" style="left:1135px;width:86px">17678.848</div><div class="cl" style="left:1222px;width:88px">2020-01-07T00</div><div class="cl" style="left:1311px;width:121px">2020-01-01T01:51:11</div><div class="cl" style="left:1433px;width:88px">2020-01-01T07</div></div>
<div class="row" style="top:780px"><div class="cr" style="left:24px;width:20px">38</div><div class="cr" style="left:45px;width:75px">1</div><div class="cr" style="left:121px;width:95px">478288</div><div class="cr" style="left:217px;width:111px">23354</div><div class="cr" style="left:329px;width:102px">231</div><div class="cc up" style="left:432px;width:75px">TRUE</div><div class="cr" style="left:508px;width:111px">20953.7198</div><div class="cr" style="left:620px;width:101px">415019.153</div><div class="cl up" style="left:722px;width:153px">JPY</div><div class="cr" style="left:876px;width:168px">1514.94</div><div class="cr" style="left:1045px;width:89px">15902.03861</div><div class="cr" style="left:1135px;width:86px">4860.4854</div><div class="cl" style="left:1222px;width:88px">2020-11-10T00</div><div class="cl" style="left:1311px;width:121px">2020-01-01T19:16:21</div><div class="cl" style="left:1433px;width:88px">2020-01-01T10</div></div>
<div class="row" style="top:800px"><div class="cr" style="left:24px;width:20px">39</div><div class="cr" style="left:45px;width:75px">628</div><div class="cr" style="left:121px;width:95px">107894</div><div class="cr" style="left:217px;width:111px">8184</div><div class="cr" style="left:329px;width:102px">65</div><div class="cc up" style="left:432px;width:75px">FALSE</div><div class="cr" style="left:508px;width:111px">6812.1616</div><div class="cr" style="left:620px;width:101px">2142681.546</div><div class="cl up" style="left:722px;width:153px">EUR</div><div class="cr" style="left:876px;width:168px">832.04</div><div class="cr" style="left:1045px;width:89px">5237.32688</div><div class="cr" style="left:1135px;width:86px">5643.5005</div><div class="cl" style="left:1222px;width:88px">2020-08-19T00</div><div class="cl" style="left:1311px;width:121px">2020-01-01T18:45:09</div><div class="cl" style="left:1433px;width:88px">2020-01-01T20</div></div>
<div class="row" style="top:820px"><div class="cr" style="left:24px;width:20px">40</div><div class="cr" style="left:45px;width:75px">549</div><div class="cr" style="left:121px;width:95px">518300</div><div class="cr" style="left:217px;width:111px">22743</div><div class="cr" style="left:329px;width:102px">6</div><div class="cc up" style="left:432px;width:75px">FALSE</div><div class="cr" style="left:508px;width:111px">9590.5604</div><div class="cr" style="left:620px;width:101px">1066619.152</div><div class="cl up" style="left:722px;width:153px">JPY</div><div class="cr" style="left:876px;width:168px">1237.41</div><div class="cr" style="left:1045px;width:89px">1765.70351</div><div class="cr" style="left:1135px;width:86px">7186.503</div><div class="cl" style="left:1222px;width:88px">2020-05-29T00</div><div class="cl" style="left:1311px;width:121px">2020-01-01T19:13:37</div><div class="cl" style="left:1433px;width:88px">2020-01-01T10</div></div>
<div class="row" style="top:840px"><div class="cr" style="left:24px;width:20px">41</div><div class="cr" style="left:45px;width:75px">463</div><div class="cr" style="left:121px;width:95px">323060</div><div class="cr" style="left:217px;width:111px">25892</div><div class="cr" style="left:329px;width:102px">248</div><div class="cc up" style="left:432px;width:75px">FALSE</div><div class="cr" style="left:508px;width:111px">12458.2891</div><div class="cr" style="left:620px;width:101px">185995.423</div><div class="cl up" style="left:722px;width:153px">USD</div><div class="cr" style="left:876px;width:168px">1943.03</div><div class="cr" style="left:1045px;width:89px">18694.49806</div><div class="cr" style="left:1135px;width:86px">20831.828</div><div class="cl" style="left:1222px;width:88px">2020-02-03T00</div><div class="cl" style="left:1311px;width:121px">2020-01-01T17:45:06</div><div class="cl" style="left:1433px;width:88px">2020-01-01T17</div></div>
<div class="row" style="top:860px"><div class="cr" style="left:24px;width:20px">42</div><div class="cr" style="left:45px;width:75px">856</div><div class="cr" style="left:121px;width:95px">143109</div><div class="cr" style="left:217px;width:111px">17857</div><div class="cr" style="left:329px;width:102px">181</div><div class="cc up" style="left:432px;width:75px">TRUE</div><div class="cr" style="left:508px;width:111px">11209.5113</div><div class="cr" style="left:620px;width:101px">1576791.064</div><div class="cl up" style="left:722px;width:153px">EUR</div><div class="cr" style="left:876px;width:168px">935.39</div><div class="cr" style="left:1045px;width:89px">5093.14378</div><div class="cr" style="left:1135px;width:86px">2125.712</div><div class="cl" style="left:1222px;width:88px">2020-11-28T00</div><div class="cl" style="left:1311px;width:121px">2020-01-01T21:35:51</div><div class="cl" style="left:1433px;width:88px">2020-01-01T16</div></div>
<div class="row" style="top:880px"><div class="cr" style="left:24px;width:20px">43</div><div class="cr" style="left:45px;width:75px">659</div><div class="cr" style="left:121px;width:95px">615093</div><div class="cr" style="left:217px;width:111px">9026</div><div class="cr" style="left:329px;width:102px">239</div><div class="cc up" style="left:432px;width:75px">FALSE</div><div class="cr" style="left:508px;width:111px">15999.285</div><div class="cr" style="left:620px;width:101px">24410.736</div><div class="cl up" style="left:722px;width:153px">EUR</div><div class="cr" style="left:876px;width:168px">431.92</div><div class="cr" style="left:1045px;width:89px">12098.35578</div><div class="cr" style="left:1135px;width:86px">18117.113</div><div class="cl" style="left:1222px;width:88px">2020-02-05T00</div><div class="cl" style="left:1311px;width:121px">2020-01-01T17:49:02</div><div class="cl" style="left:1433px;width:88px">2020-01-01T20</div></div>
<div class="row" style="top:900px"><div class="cr" style="left:24px;width:20px">44</div><div class="cr" style="left:45px;width:75px">489</div><div class="cr" style="left:121px;width:95px">256496</div><div class="cr" style="left:217px;width:111px">12775</div><div class="cr" style="left:329px;width:102px">91</div><div class="cc up" style="left:432px;width:75px">TRUE</div><div class="cr" style="left:508px;width:111px">7220.8701</div><div class="cr" style="left:620px;width:101px">1349081.919</div><div class="cl up" style="left:722px;width:153px">JPY</div><div class="cr" style="left:876px;width:168px">1554.76</div><div class="cr" style="left:1045px;width:89px">2641.74129</div><div class="cr" style="left:1135px;width:86px">8750.512</div><div class="cl" style="left:1222px;width:88px">2020-07-31T00</div><div class="cl" style="left:1311px;width:121px">2020-01-01T02:43:22</div><div class="cl" style="left:1433px;width:88px">2020-01-01T23</div></div>
<div class="a" style="left:22px;top:18px;width:24px;height:23px;border:2px solid #107c41"></div>
<div class="a" style="left:42px;top:37px;width:6px;height:6px;background:#107c41;border:1px solid #fff"></div>
</div>
<div class="a" style="left:1521px;top:218px;width:22px;height:917px;background:#e6e6e6"></div>
<div class="a" style="left:1524px;top:218px;width:16px;height:915px;background:#f5f5f5;border-radius:8px"></div>
<svg class="a" style="left:1527px;top:222px" width="11" height="9" viewBox="0 0 11 9"><path d="M5.5 1.5l4.5 6h-9z" fill="#6e6e6e" stroke="#6e6e6e" stroke-linejoin="round"/></svg>
<div class="a" style="left:1528px;top:235px;width:9px;height:17px;border-radius:5px;background:#727272"></div>
<svg class="a" style="left:1527px;top:1122px" width="11" height="9" viewBox="0 0 11 9"><path d="M5.5 7.5l4.5-6h-9z" fill="#6e6e6e" stroke="#6e6e6e" stroke-linejoin="round"/></svg>
<!-- task pane -->
<div class="a" style="left:1543px;top:218px;width:460px;height:946px;background:#f0f0f0;border-left:1px solid #d6d6d6"></div>
<div class="t" style="left:1557px;top:232px;font-size:15px;line-height:18px;color:#242424">Query Streams</div>
<svg class="a" style="left:1940px;top:235px" width="48" height="13" viewBox="0 0 48 13">
<path d="M1 2.5l6.5 6.5l6.5-6.5" fill="none" stroke="#242424" stroke-width="1.1"/>
<path d="M35.5 1.5l10 10M45.5 1.5l-10 10" stroke="#242424" stroke-width="1.1"/>
</svg>
<div class="a" id="pane" style="left:1558px;top:261px;width:416px;height:888px;overflow:hidden;background:linear-gradient(165deg,#34d399 0%,#21b884 45%,#069a6b 100%)">
 <!-- card 1 -->
 <div class="a" style="left:20px;top:40px;width:376px;height:111px;background:#2a3649;border-radius:12px;box-shadow:0 6px 14px rgba(0,0,0,0.22)"></div>
 <div class="a" style="left:45px;top:27px;width:127px;height:37px;background:#222b3a;border-radius:19px;border:1px solid #2b6e58;box-shadow:0 3px 8px rgba(0,0,0,0.25)"></div>
 <svg class="a" style="left:61px;top:38px" width="10" height="16" viewBox="0 0 10 16"><path d="M8 1.5l-6 6.5l6 6.5" fill="none" stroke="#34d399" stroke-width="2.2"/></svg>
 <div class="t" style="left:80px;top:38px;font-size:14.3px;line-height:18px;font-weight:bold;color:#34d399">Main Menu</div>
 <div class="t" style="left:20px;width:376px;text-align:center;top:75px;font-size:23px;line-height:26px;font-weight:bold;color:#fff;letter-spacing:-0.4px;-webkit-text-stroke:0.7px #fff">Saved Queries</div>
 <div class="t" style="left:20px;width:376px;text-align:center;top:109px;font-size:14px;line-height:17px;color:#d6dae0">View and run your saved queries</div>
 <!-- card 2 -->
 <div class="a" style="left:20px;top:175px;width:376px;height:760px;background:#2a3649;border-radius:12px;box-shadow:0 6px 14px rgba(0,0,0,0.22)"></div>
 <svg class="a" style="left:45px;top:200px" width="15" height="21" viewBox="0 0 15 21"><path d="M0 0h15v21l-7.5-5l-7.5 5z" fill="#34d399"/></svg>
 <div class="t" style="left:70px;top:205px;font-size:12.7px;line-height:15px;font-weight:bold;color:#eceef1">Select up to (5) queries to stream</div>
 <div class="a" style="left:45px;top:236px;width:327px;height:42px;background:#3c4759;border:1px solid #566175;border-radius:8px"></div>
 <svg class="a" style="left:57px;top:250px" width="15" height="15" viewBox="0 0 15 15"><circle cx="5.8" cy="5.8" r="4.3" fill="none" stroke="#a3abb8" stroke-width="1.7"/><path d="M9 9l4.5 4.5" stroke="#a3abb8" stroke-width="2"/></svg>
 <div class="t" style="left:86px;top:249px;font-size:14px;line-height:17px;color:#9ba3b0">Search queries...</div>
 <!-- list -->
 <div class="a" style="left:45px;top:294px;width:328px;height:152px;border:1px solid #4f5a6d;border-radius:8px;overflow:hidden;background:#333d4f">
  <div class="a" style="left:0;top:-26px;width:317px;height:44px;border-bottom:1px solid #4a5466"></div>
  <svg class="a" style="left:13px;top:-10px" width="16" height="14" viewBox="0 0 16 14"><path d="M1 1.5h9.5c-1.5 3-1.5 8-0.5 11.5h-9z" fill="#2b8be0"/><path d="M10.5 1.5c2 0 4-0.5 4.5 1c-1 3-3 7.5-5 10.5c-1-3.5-1-8.5 0.5-11.5z" fill="#0d3d66"/></svg>
  <div class="a" style="left:36px;top:-9px;width:13px;height:13px;background:#fff;border-radius:2px"></div>
  <div class="t" style="left:61px;top:-11px;font-size:13.7px;line-height:17px;color:#e8eaed">Find all shipments with weight betwe...</div>
  <div class="a" style="left:0;top:18px;width:317px;height:44px"></div>
  <svg class="a" style="left:13px;top:34px" width="16" height="14" viewBox="0 0 16 14"><path d="M1 1.5h9.5c-1.5 3-1.5 8-0.5 11.5h-9z" fill="#2b8be0"/><path d="M10.5 1.5c2 0 4-0.5 4.5 1c-1 3-3 7.5-5 10.5c-1-3.5-1-8.5 0.5-11.5z" fill="#0d3d66"/></svg>
  <div class="a" style="left:36px;top:35px;width:13px;height:13px;background:#fff;border-radius:2px"></div>
  <div class="t" style="left:61px;top:33px;font-size:13.7px;line-height:17px;color:#eef0f2">Find vehicles that need maintenance ...</div>
  <div class="a" style="left:0;top:62px;width:317px;height:90px;background:#30575f"></div>
  <div class="a" style="left:0;top:106px;width:317px;height:1px;background:#46706f"></div>
  <svg class="a" style="left:12px;top:77px" width="16" height="17" viewBox="0 0 16 17"><path d="M4 4c2-2 6-2 10 2l-6 2z" fill="#a83232"/><path d="M3 9c1-3 5-3 6 0c0 3-1 6-3 7c-2-0.5-3.5-3-3-7z" fill="#c9cdd2"/><path d="M5 1.5c1 0 2 1 1.5 2" fill="none" stroke="#c9cdd2" stroke-width="1"/></svg>
  <div class="a" style="left:36px;top:79px;width:13px;height:13px;background:#34d399;border-radius:2px"></div>
  <svg class="a" style="left:36px;top:79px" width="13" height="13" viewBox="0 0 13 13"><path d="M3 6.8l2.4 2.4l4.6-5" fill="none" stroke="#1d2633" stroke-width="1.8"/></svg>
  <div class="t" style="left:61px;top:77px;font-size:13.7px;line-height:17px;color:#eef0f2">Shared 500k</div>
  <svg class="a" style="left:12px;top:121px" width="16" height="17" viewBox="0 0 16 17"><path d="M4 4c2-2 6-2 10 2l-6 2z" fill="#a83232"/><path d="M3 9c1-3 5-3 6 0c0 3-1 6-3 7c-2-0.5-3.5-3-3-7z" fill="#c9cdd2"/><path d="M5 1.5c1 0 2 1 1.5 2" fill="none" stroke="#c9cdd2" stroke-width="1"/></svg>
  <div class="a" style="left:36px;top:123px;width:13px;height:13px;background:#34d399;border-radius:2px"></div>
  <svg class="a" style="left:36px;top:123px" width="13" height="13" viewBox="0 0 13 13"><path d="M3 6.8l2.4 2.4l4.6-5" fill="none" stroke="#1d2633" stroke-width="1.8"/></svg>
  <div class="t" style="left:61px;top:121px;font-size:13.7px;line-height:17px;color:#eef0f2">Sales Data</div>
  <div class="a" style="left:316px;top:0;width:11px;height:152px;background:#2f3a4b"></div>
  <svg class="a" style="left:317px;top:4px" width="9" height="7" viewBox="0 0 9 7"><path d="M4.5 1l4 5h-8z" fill="#3a6a66"/></svg>
  <div class="a" style="left:318px;top:31px;width:7px;height:107px;background:#3a6a66;border-radius:4px"></div>
  <svg class="a" style="left:317px;top:141px" width="9" height="7" viewBox="0 0 9 7"><path d="M4.5 6l4-5h-8z" fill="#3a6a66"/></svg>
 </div>
 <svg class="a" style="left:44px;top:463px" width="13" height="13" viewBox="0 0 13 13"><circle cx="6.5" cy="6.5" r="6" fill="#1fbf80"/><path d="M6.5 5.5v4.5" stroke="#1d2633" stroke-width="1.6"/><circle cx="6.5" cy="3.4" r="0.9" fill="#1d2633"/></svg>
 <div class="t" style="left:67px;top:464px;font-size:11.9px;line-height:15px;color:#b9c0cb">Only showing online datasources</div>
 <div class="a" style="left:45px;top:493px;width:146px;height:34px;background:#3c4759;border:1px solid #566175;border-radius:8px"></div>
 <svg class="a" style="left:62px;top:502px" width="14" height="17" viewBox="0 0 14 17"><path d="M0.5 2.5h13" stroke="#fff" stroke-width="1.6"/><path d="M4.5 2.5v-1.5h5v1.5" fill="none" stroke="#fff" stroke-width="1.4"/><path d="M1.5 4.5h11l-1 12h-9z" fill="#fff"/><path d="M4.5 6.5v8M7 6.5v8M9.5 6.5v8" stroke="#9aa3b0" stroke-width="0.8"/></svg>
 <div class="t" style="left:84px;top:502px;font-size:13.3px;line-height:17px;font-weight:normal;color:#fff;-webkit-text-stroke:0.25px #fff">Clear Selection</div>
 <div class="a" style="left:45px;top:547.5px;width:326px;height:1.5px;background:#d3d7dd"></div>
 <svg class="a" style="left:45px;top:576px" width="20" height="17" viewBox="0 0 20 17"><rect x="0" y="0" width="20" height="17" rx="2.5" fill="#4caf50"/><rect x="3" y="5.3" width="5.8" height="3.1" fill="#263043"/><rect x="11.3" y="5.3" width="5.7" height="3.1" fill="#263043"/><rect x="3" y="11.5" width="5.8" height="3.2" fill="#263043"/><rect x="11.3" y="11.5" width="5.7" height="3.2" fill="#263043"/></svg>
 <div class="t" style="left:75px;top:577px;font-size:12.8px;line-height:17px;font-weight:bold;color:#e6e8eb">Query Destinations</div>
 <div class="a" style="left:339px;top:568px;width:32px;height:32px;background:#283447;border-radius:5px;box-shadow:0 0 7px rgba(52,211,153,0.3)"></div>
 <svg class="a" style="left:346px;top:576px" width="18" height="16" viewBox="0 0 18 16"><path d="M2.5 7c0.5-3.5 3-5.5 6.5-5.5c2.5 0 4.5 1.2 5.5 3" fill="none" stroke="#34d399" stroke-width="2.2"/><path d="M16 1v5h-5z" fill="#34d399"/><path d="M15.5 9c-0.5 3.5-3 5.5-6.5 5.5c-2.5 0-4.5-1.2-5.5-3" fill="none" stroke="#34d399" stroke-width="2.2"/><path d="M2 15v-5h5z" fill="#34d399"/></svg>
 <!-- dest 1 -->
 <div class="a" style="left:45px;top:616px;width:326px;height:76px;background:#343e51;border:1px solid #4f5a6d;border-radius:8px;overflow:hidden">
  <div class="a" style="left:0;top:0;width:326px;height:29px;background:#33545d;border-bottom:1px solid #2aa67a"></div>
  <div class="t" style="left:12px;top:8px;font-size:11.4px;line-height:15px;font-weight:bold;color:#f4f5f7">Shared 500k</div>
  <div class="t" style="left:12px;top:48px;font-size:12.9px;line-height:17px;color:#e8eaed">Sheet1</div>
  <svg class="a" style="left:299px;top:50px" width="14" height="9" viewBox="0 0 14 9"><path d="M1.5 1.5l5.5 5.5l5.5-5.5" fill="none" stroke="#34d399" stroke-width="2"/></svg>
 </div>
 <!-- dest 2 -->
 <div class="a" style="left:45px;top:708px;width:326px;height:76px;background:#343e51;border:1px solid #4f5a6d;border-radius:8px;overflow:hidden">
  <div class="a" style="left:0;top:0;width:326px;height:29px;background:#33545d;border-bottom:1px solid #2aa67a"></div>
  <div class="t" style="left:12px;top:8px;font-size:11.4px;line-height:15px;font-weight:bold;color:#f4f5f7">Sales Data</div>
  <div class="t" style="left:12px;top:48px;font-size:12.9px;line-height:17px;color:#e8eaed">Sheet2</div>
  <svg class="a" style="left:299px;top:50px" width="14" height="9" viewBox="0 0 14 9"><path d="M1.5 1.5l5.5 5.5l5.5-5.5" fill="none" stroke="#34d399" stroke-width="2"/></svg>
 </div>
 <div class="a" style="left:45px;top:803.5px;width:326px;height:1.5px;background:#d3d7dd"></div>
 <svg class="a" style="left:44px;top:825px" width="20" height="16" viewBox="0 0 20 16"><path d="M5 3l-4 5l4 5M15 3l4 5l-4 5" fill="none" stroke="#34d399" stroke-width="1.8"/><path d="M12 1l-4 14" stroke="#34d399" stroke-width="1.8"/></svg>
 <div class="t" style="left:70px;top:827px;font-size:12.7px;line-height:17px;font-weight:bold;color:#e6e8eb">Filtering Conditions</div>
 <div class="a" style="left:45px;top:853px;width:326px;height:80px;background:#343e51;border:1px solid #4f5a6d;border-radius:8px"></div>
 <svg class="a" style="left:59px;top:875px" width="18" height="14" viewBox="0 0 18 14"><rect x="0" y="0" width="18" height="14" rx="1" fill="#6b6f76"/><rect x="0" y="0" width="18" height="3" fill="#8a8e95"/><path d="M6 6l-2 3l2 3M12 6l2 3l-2 3M10 5.5l-2 7" fill="none" stroke="#d0d3d8" stroke-width="0.9"/></svg>
 <div class="t" style="left:90px;top:874px;font-size:13.3px;line-height:17px;color:#e8eaed">Shared 500k</div>
 <svg class="a" style="left:334px;top:874px" width="17" height="17" viewBox="0 0 17 17"><path d="M8.5 0.5l1.6 2.2l2.6-0.8l0.4 2.7l2.6 0.9l-1.2 2.5l1.8 2l-2.3 1.4l0.2 2.7l-2.7-0.1l-1.1 2.5l-2.1-1.8l-2.3 1.4l-0.7-2.6l-2.7-0.5l0.8-2.6l-2-1.8l2.1-1.7l-0.6-2.6l2.7-0.3l0.9-2.6l2.4 1.2z" fill="#9aa0a8"/><circle cx="8.5" cy="8.5" r="2.6" fill="#343e51"/></svg>
</div>
<!-- pane scrollbar -->
<div class="a" style="left:1974px;top:261px;width:16px;height:888px;background:#fbfbfb;border:1px solid #e0e0e0"></div>
<svg class="a" style="left:1977px;top:265px" width="10" height="8" viewBox="0 0 10 8"><path d="M5 1.5l4 5h-8z" fill="#8a8a8a" stroke="#8a8a8a" stroke-linejoin="round"/></svg>
<div class="a" style="left:1977px;top:279px;width:9px;height:452px;background:#8a8a8a;border-radius:5px"></div>
<svg class="a" style="left:1977px;top:1135px" width="10" height="8" viewBox="0 0 10 8"><path d="M5 6.5l4-5h-8z" fill="#8a8a8a" stroke="#8a8a8a" stroke-linejoin="round"/></svg>

<!-- sheet tabs bar -->
<div class="a" style="left:0;top:1132px;width:1543px;height:32px;background:#e1e1e1"></div>
<div class="a" style="left:1544px;top:1149px;width:459px;height:15px;background:#f0f0f0"></div>
<svg class="a" style="left:24px;top:1140px" width="46" height="14" viewBox="0 0 46 14"><path d="M8.5 1.5l-5.5 5.5l5.5 5.5M37 1.5l5.5 5.5l-5.5 5.5" fill="none" stroke="#a6a6a6" stroke-width="1.1"/></svg>
<div class="a" style="left:114px;top:1132px;width:57px;height:27px;background:#fff;border-radius:0 0 6px 6px"></div>
<div class="t" style="left:122px;top:1138px;font-size:12.5px;line-height:16px;color:#242424;font-weight:bold">Sheet1</div>
<div class="a" style="left:122px;top:1155px;width:41px;height:2px;background:#107c41"></div>
<div class="a" style="left:175px;top:1139px;width:1px;height:18px;background:#c4c4c4"></div>
<div class="t" style="left:188px;top:1141px;font-size:13.3px;line-height:16px;color:#424242">Sheet2</div>
<div class="a" style="left:243px;top:1139px;width:1px;height:18px;background:#c4c4c4"></div>
<svg class="a" style="left:284px;top:1141px" width="13" height="13" viewBox="0 0 13 13"><path d="M6.5 1v11M1 6.5h11" stroke="#424242" stroke-width="1.1"/></svg>
<svg class="a" style="left:926px;top:1141px" width="4" height="14" viewBox="0 0 4 14"><circle cx="2" cy="2.5" r="1.1" fill="#424242"/><circle cx="2" cy="7" r="1.1" fill="#424242"/><circle cx="2" cy="11.5" r="1.1" fill="#424242"/></svg>
<div class="a" style="left:944px;top:1139px;width:580px;height:17px;background:#f5f5f5;border-radius:9px"></div>
<svg class="a" style="left:948px;top:1142px" width="10" height="11" viewBox="0 0 10 11"><path d="M2 5.5l6-4.5v9z" fill="#6e6e6e" stroke="#6e6e6e" stroke-linejoin="round"/></svg>
<div class="a" style="left:962px;top:1143px;width:279px;height:9px;background:#727272;border-radius:5px"></div>
<svg class="a" style="left:1511px;top:1142px" width="10" height="11" viewBox="0 0 10 11"><path d="M8 5.5l-6-4.5v9z" fill="#6e6e6e" stroke="#6e6e6e" stroke-linejoin="round"/></svg>
<!-- status bar -->
<div class="a" style="left:0;top:1164px;width:2003px;height:23px;background:#f3f3f3"></div>
<div class="t" style="left:9px;top:1168px;font-size:11px;line-height:16px;color:#242424">Ready</div>
<svg class="a" style="left:59px;top:1167px" width="16" height="15" viewBox="0 0 16 15"><rect x="1" y="1" width="13" height="12" fill="none" stroke="#424242" stroke-width="1.1"/><path d="M1 3.5h13M3 6h4M3 8.5h3M3 11h3" stroke="#424242" stroke-width="0.9"/><circle cx="11" cy="9.5" r="3.2" fill="#f3f3f3" stroke="#424242" stroke-width="1"/><circle cx="11" cy="9.5" r="1.3" fill="#424242"/></svg>
<svg class="a" style="left:91px;top:1166px" width="17" height="16" viewBox="0 0 17 16"><circle cx="6.5" cy="2.5" r="1.6" fill="none" stroke="#424242" stroke-width="1"/><path d="M1 5.5h11M6.5 5.5v4l-3 5M6.5 9.5l2 2" fill="none" stroke="#424242" stroke-width="1.1"/><path d="M9.5 10.5l5 5M14.5 10.5l-5 5" stroke="#424242" stroke-width="1.1"/></svg>
<div class="t" style="left:110px;top:1167px;font-size:11.6px;line-height:16px;color:#242424;-webkit-text-stroke:0.3px #242424">Accessibility: Investigate</div>
<div class="a" style="left:1693px;top:1164px;width:40px;height:22px;background:#dcdcdc"></div>
<svg class="a" style="left:1704px;top:1166px" width="100" height="18" viewBox="0 0 100 18">
<path d="M2.5 2.5h12v12h-12zM2.5 6.5h12M2.5 10.5h12M6.5 2.5v12M10.5 2.5v12" fill="none" stroke="#242424" stroke-width="1.1"/>
<rect x="42.5" y="2.5" width="13" height="12" fill="none" stroke="#242424" stroke-width="1.1"/><rect x="45.5" y="4.5" width="7" height="8" fill="none" stroke="#242424" stroke-width="0.9"/><path d="M47 7h4M47 9h4" stroke="#242424" stroke-width="0.8"/>
<rect x="82.5" y="2.5" width="13" height="12" fill="none" stroke="#242424" stroke-width="1.1"/><path d="M86.5 2.5v5h5v-5M82.5 9.5h6" fill="none" stroke="#242424" stroke-width="1.1"/>
</svg>
<div class="a" style="left:1819px;top:1174px;width:8px;height:1.2px;background:#424242"></div>
<div class="a" style="left:1832px;top:1175px;width:100px;height:1.2px;background:#6e6e6e"></div>
<div class="a" style="left:1880px;top:1169px;width:5px;height:12px;background:#5c5c5c;border-radius:1px"></div>
<svg class="a" style="left:1936px;top:1169px" width="11" height="11" viewBox="0 0 11 11"><path d="M5.5 0.5v10M0.5 5.5h10" stroke="#424242" stroke-width="1.1"/></svg>
<div class="t" style="left:1958px;top:1167px;font-size:10.5px;line-height:16px;color:#424242">100%</div>
<!-- mouse cursor -->
<svg class="a" style="left:1038px;top:1020px" width="17" height="18" viewBox="0 0 17 18" shape-rendering="crispEdges"><path d="M5 2h6v5h4v6h-4v5h-6v-5h-4v-6h4z" fill="#000"/><path d="M4 1h6v5h4v6h-4v5h-6v-5h-4v-6h4z" fill="#000"/><path d="M5 2h4v5h4v4h-4v5h-4v-5h-4v-4h4z" fill="#fff"/></svg>

</div>
</body></html>
